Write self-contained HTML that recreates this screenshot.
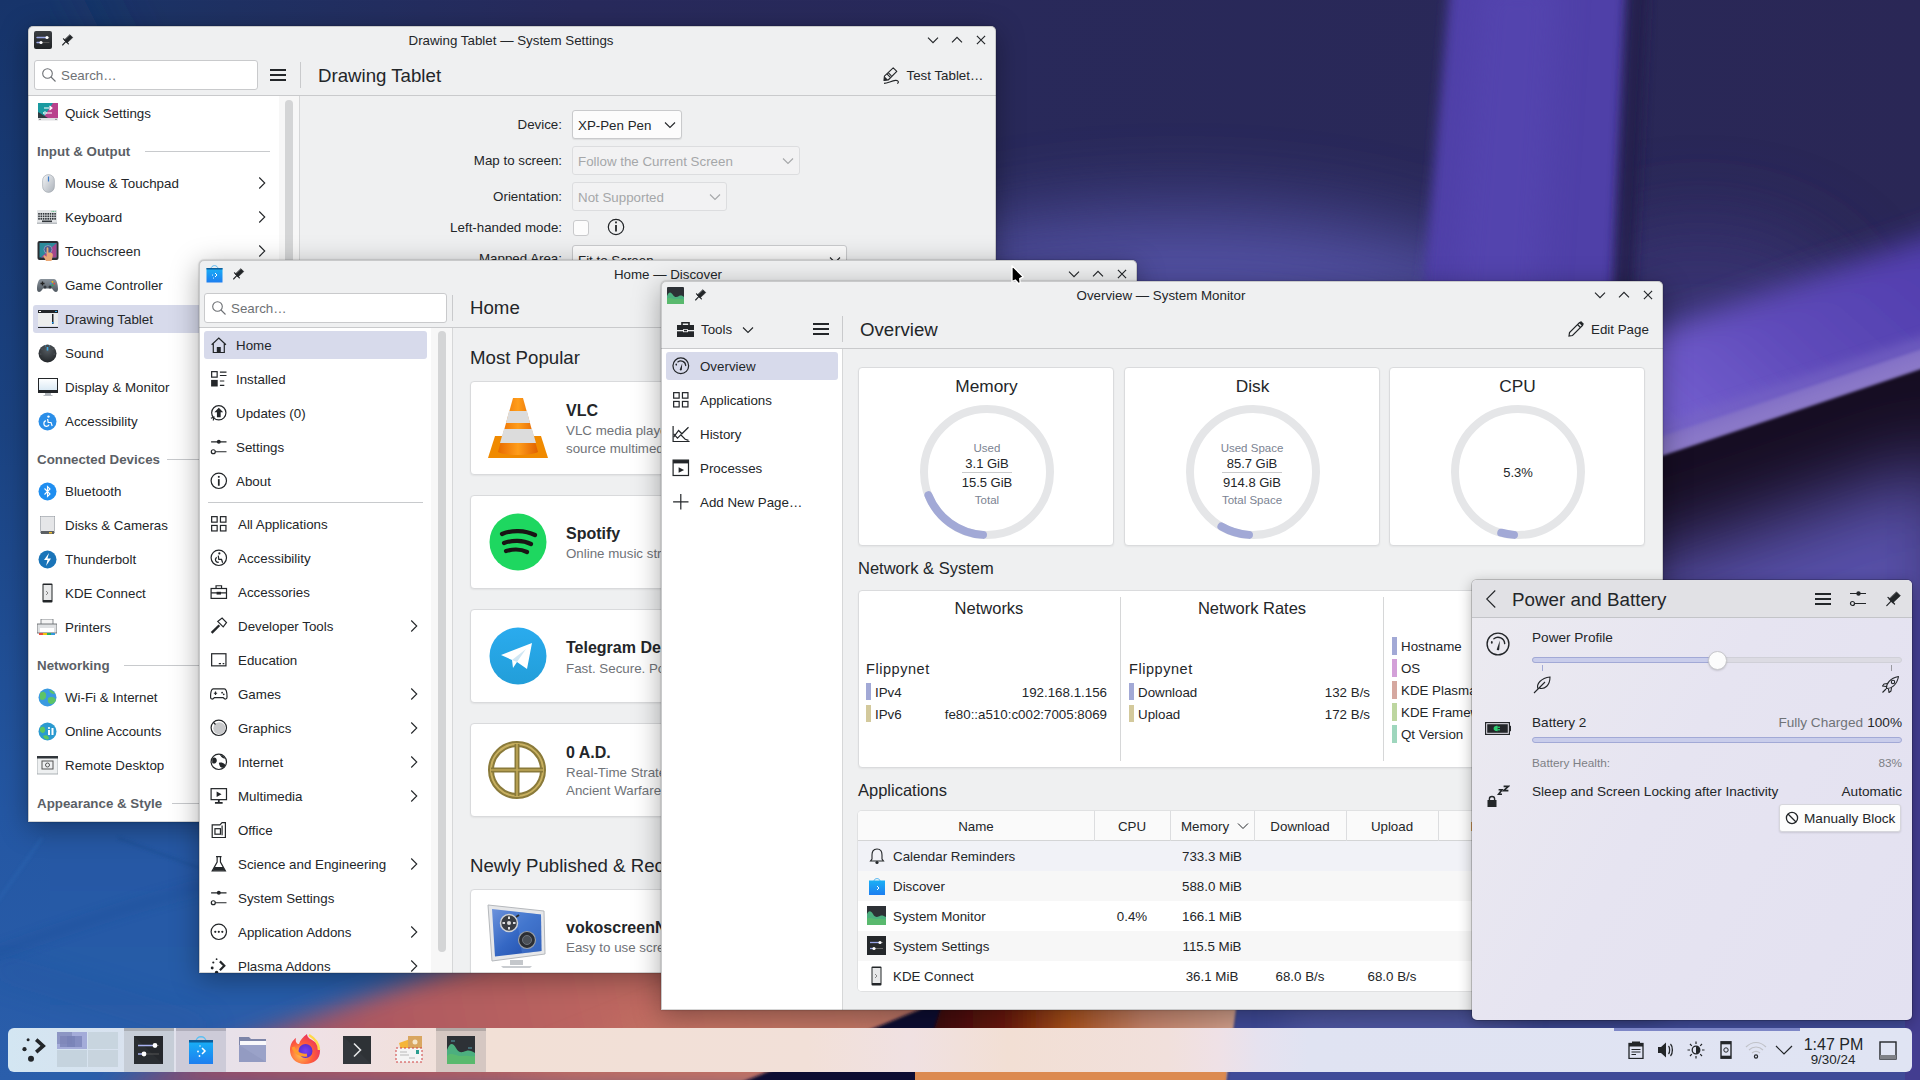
<!DOCTYPE html>
<html><head><meta charset="utf-8">
<style>
*{box-sizing:border-box;margin:0;padding:0}
html,body{width:1920px;height:1080px;overflow:hidden}
body{position:relative;font-family:"Liberation Sans",sans-serif;color:#232629;font-size:13.33px;background:#1c2a55}
.a{position:absolute}
.t{position:absolute;white-space:nowrap}
.win{position:absolute;overflow:hidden;background:#eff0f1;border-radius:5px 5px 0 0}
</style></head><body>
<svg class="a" style="left:0;top:0" width="1920" height="1080" viewBox="0 0 1920 1080">
<defs>
<linearGradient id="wg0" x1="0" y1="0" x2="1920" y2="0" gradientUnits="userSpaceOnUse">
<stop offset="0" stop-color="#17376b"/><stop offset="0.12" stop-color="#1f3163"/><stop offset="0.3" stop-color="#282a5c"/><stop offset="1" stop-color="#2a2756"/>
</linearGradient>
<linearGradient id="wgL" x1="0" y1="0" x2="0" y2="1080" gradientUnits="userSpaceOnUse">
<stop offset="0" stop-color="#17346a"/><stop offset="0.4" stop-color="#1b4382"/><stop offset="0.75" stop-color="#2457a3"/><stop offset="1" stop-color="#2a5eab"/>
</linearGradient>
<linearGradient id="wgS" x1="150" y1="1080" x2="1000" y2="900" gradientUnits="userSpaceOnUse">
<stop offset="0" stop-color="#8e4a6a"/><stop offset="0.3" stop-color="#b05a60"/><stop offset="0.65" stop-color="#c26c60"/><stop offset="1" stop-color="#b87a6a"/>
</linearGradient>
<linearGradient id="wgO" x1="930" y1="0" x2="1236" y2="0" gradientUnits="userSpaceOnUse">
<stop offset="0" stop-color="#3a0608"/><stop offset="0.25" stop-color="#6a1a08"/><stop offset="0.45" stop-color="#a8501c"/><stop offset="0.7" stop-color="#c5836a"/><stop offset="1" stop-color="#d2a08c"/>
</linearGradient>
<linearGradient id="wgV" x1="1400" y1="0" x2="1620" y2="0" gradientUnits="userSpaceOnUse">
<stop offset="0" stop-color="#3a3288" stop-opacity="0"/><stop offset="0.18" stop-color="#4e3fa8"/><stop offset="0.5" stop-color="#5241aa"/><stop offset="1" stop-color="#4a3aa4"/>
</linearGradient>
<linearGradient id="wgD" x1="1680" y1="440" x2="1900" y2="200" gradientUnits="userSpaceOnUse">
<stop offset="0" stop-color="#7560d0"/><stop offset="0.5" stop-color="#5d49b8"/><stop offset="1" stop-color="#4f3cac"/>
</linearGradient>
<linearGradient id="wgB" x1="0" y1="470" x2="0" y2="620" gradientUnits="userSpaceOnUse">
<stop offset="0" stop-color="#170e22"/><stop offset="0.4" stop-color="#1e1535"/><stop offset="1" stop-color="#4a4190"/>
</linearGradient>
<filter id="bl2" x="-20%" y="-20%" width="140%" height="140%"><feGaussianBlur stdDeviation="1.5"/></filter>
<filter id="bl6" x="-20%" y="-20%" width="140%" height="140%"><feGaussianBlur stdDeviation="6"/></filter>
<filter id="bl10x" x="-50%" y="-20%" width="200%" height="140%"><feGaussianBlur stdDeviation="12"/></filter>
<filter id="bl15" x="-30%" y="-30%" width="160%" height="160%"><feGaussianBlur stdDeviation="15"/></filter>
<filter id="bl40" x="-50%" y="-50%" width="200%" height="200%"><feGaussianBlur stdDeviation="40"/></filter>
</defs>
<rect width="1920" height="1080" fill="url(#wg0)"/>
<!-- left blue column -->
<polygon points="-200,-100 10,-100 330,560 950,1200 -200,1200" fill="url(#wgL)" filter="url(#bl40)"/>
<rect x="-50" y="0" width="100" height="1080" fill="url(#wgL)"/>
<!-- faint streaks bottom-left -->
<path d="M-10 955 C60 930 130 905 210 885" stroke="#1d4c94" stroke-width="6" fill="none" opacity="0.55" filter="url(#bl6)"/>
<path d="M42 838 L-5 905" stroke="#2a64b0" stroke-width="3" fill="none" opacity="0.6" filter="url(#bl2)"/>
<path d="M118 838 L210 872" stroke="#1f4f96" stroke-width="3" fill="none" opacity="0.6" filter="url(#bl2)"/>
<path d="M-10 965 C60 985 140 1010 210 1030" stroke="#1f5098" stroke-width="10" fill="none" opacity="0.45" filter="url(#bl15)"/>
<!-- purple-blue glow middle -->
<ellipse cx="1180" cy="330" rx="360" ry="120" fill="#5754aa" opacity="0.9" filter="url(#bl40)"/>
<!-- vertical purple beam -->
<ellipse cx="1700" cy="330" rx="160" ry="110" fill="#3a3676" opacity="0.8" filter="url(#bl40)"/>
<polygon points="1452,-40 1630,-40 1600,640 1392,640" fill="#4f3fa8" filter="url(#bl6)"/>
<polygon points="1480,-20 1560,-20 1520,620 1430,620" fill="#5646b2" opacity="0.6" filter="url(#bl15)"/>
<polygon points="1628,-20 1648,-20 1618,620 1598,620" fill="#231d48" opacity="0.75" filter="url(#bl6)"/>
<!-- diagonal beam -->
<polygon points="1540,372 1960,224 1960,372 1540,512" fill="url(#wgD)" filter="url(#bl15)"/>
<!-- dark below diagonal -->
<polygon points="1500,500 1663,445 1960,345 1960,760 1500,760" fill="#170e22" filter="url(#bl2)"/>
<polygon points="1560,590 1960,455 1960,760 1560,760" fill="#5750a8" filter="url(#bl40)"/>
<polygon points="1560,470 1960,336 1960,356 1560,490" fill="#8a78c8" filter="url(#bl2)"/>
<polygon points="1600,445 1960,324 1960,340 1600,460" fill="#7866c4" opacity="0.7" filter="url(#bl6)"/>
<!-- salmon bottom -->
<polygon points="103,1090 928,800 1000,800 1000,1090" fill="url(#wgS)" filter="url(#bl10x)"/>
<polygon points="500,1080 700,1000 880,980 900,1080" fill="#c67a66" opacity="0.5" filter="url(#bl15)"/>
<!-- dark wedge + orange -->
<polygon points="955,995 1240,995 1226,1090 723,1090" fill="#0c1030" filter="url(#bl2)"/>
<polygon points="945,995 1240,995 1226,1090 915,1090" fill="url(#wgO)" filter="url(#bl2)"/>
<polygon points="915,1072 1226,1072 1226,1090 915,1090" fill="#dc8a50"/>
<polygon points="1238,995 1960,995 1960,1090 1226,1090" fill="#404c98" filter="url(#bl2)"/>
<ellipse cx="1400" cy="1020" rx="120" ry="30" fill="#5a60a8" opacity="0.6" filter="url(#bl15)"/>
<rect x="1905" y="600" width="30" height="490" fill="#433d90"/>
</svg>
<div class="win" style="left:28px;top:26px;width:968px;height:796px;box-shadow:0 0 1.5px rgba(0,0,0,0.5), 0 6px 28px rgba(0,0,0,0.34);">
<div class="a" style="left:6.00px;top:5.00px;width:18px;height:18px;background:linear-gradient(#3b3e42,#202326);border-radius:2px;"></div>
<svg class="a" style="left:6.00px;top:5.00px;" width="18" height="18" viewBox="0 0 18 18"><g stroke-linecap="round"><path d="M3 6.5 H13" stroke="#9aa6e8" stroke-width="1.4"/><path d="M13 6.5 H15" stroke="#555" stroke-width="1"/><circle cx="13" cy="6.5" r="1.6" fill="#fff"/><path d="M3 11.5 H7" stroke="#9aa6e8" stroke-width="1.4"/><path d="M7 11.5 H15" stroke="#555" stroke-width="1"/><circle cx="7" cy="11.5" r="1.6" fill="#fff"/></g></svg>
<svg class="a" style="left:34.00px;top:7.50px;" width="12" height="12" viewBox="0 0 12 12"><g fill="#232629" stroke="#232629" stroke-linecap="round"><path d="M8 0.8 L10.8 3.6 L5 9 L2.3 6.2 Z" stroke-width="0.5"/><path d="M1.5 4.8 L6.4 9.8" stroke-width="1.2"/><path d="M4 7.4 L0.6 11" stroke-width="1.1"/></g></svg>
<div class="t" style="font-size:13.33px;line-height:20px;height:20px;color:#232629;left:183.00px;width:600px;text-align:center;top:5.17px;">Drawing Tablet — System Settings</div>
<svg class="a" style="left:899.00px;top:8.00px;" width="12" height="12" viewBox="0 0 12 12"><path d="M1 3.6 L6 8.6 L11 3.6" fill="none" stroke="#232629" stroke-width="1.15"/></svg>
<svg class="a" style="left:923.00px;top:8.00px;" width="12" height="12" viewBox="0 0 12 12"><path d="M1 8.4 L6 3.4 L11 8.4" fill="none" stroke="#232629" stroke-width="1.15"/></svg>
<svg class="a" style="left:947.00px;top:8.00px;" width="12" height="12" viewBox="0 0 12 12"><path d="M1.9 1.9 L10.1 10.1 M10.1 1.9 L1.9 10.1" fill="none" stroke="#232629" stroke-width="1.15"/></svg>
<div class="a" style="left:6.00px;top:34.00px;width:224px;height:30px;background:#fff;border:1px solid #c9cacc;border-radius:3px;"></div>
<svg class="a" style="left:13.00px;top:41.00px;" width="16" height="16" viewBox="0 0 16 16"><g fill="none" stroke="#6d7074" stroke-width="1.1"><circle cx="6.5" cy="6.5" r="4.8"/><path d="M10 10 L14.5 14.5"/></g></svg>
<div class="t" style="font-size:13.33px;line-height:20px;height:20px;color:#6e7175;left:33.00px;top:40.17px;">Search…</div>
<svg class="a" style="left:242.00px;top:43.00px;" width="16" height="12" viewBox="0 0 16 12"><g fill="#232629"><rect x="0" y="0" width="16" height="2"/><rect x="0" y="5" width="16" height="2"/><rect x="0" y="10" width="16" height="2"/></g></svg>
<div class="a" style="left:272.00px;top:36.00px;width:1px;height:26px;background:#c9cacc;"></div>
<div class="a" style="left:0.00px;top:69.00px;width:968px;height:1px;background:#c9cacc;"></div>
<div class="a" style="left:1.00px;top:70.00px;width:250px;height:726px;background:#fff;"></div>
<div class="a" style="left:251.00px;top:70.00px;width:20px;height:726px;background:#f7f7f7;"></div>
<div class="a" style="left:257.00px;top:74.00px;width:8px;height:722px;background:#d4d5d6;border-radius:4px;"></div>
<div class="a" style="left:271.00px;top:70.00px;width:1px;height:726px;background:#d6d7d8;"></div>
<div class="t" style="font-size:18.67px;line-height:28px;height:28px;color:#232629;left:290.00px;top:35.87px;">Drawing Tablet</div>
<svg class="a" style="left:855.00px;top:41.00px;" width="18" height="18" viewBox="0 0 18 18"><g fill="none" stroke="#232629" stroke-width="1.1" stroke-linejoin="round"><path d="M10.2 0.8 L13.8 4.4 L5.2 13 L1 13.4 L1.4 9.2 Z"/><path d="M3.9 6.9 L7.1 10.1 M5.2 5.6 L8.4 8.8"/><path d="M1 16.4 C5 16 8.5 13.8 12.5 13.4 C15.8 13.1 16.2 15.8 14.2 16.6"/></g><path d="M1.4 9.2 L3.9 11.7 L5.2 13 L1 13.4 Z" fill="#232629"/></svg>
<div class="t" style="font-size:13.33px;line-height:20px;height:20px;color:#232629;left:878.50px;top:40.17px;">Test Tablet…</div>
<div class="a" style="left:5.00px;top:279.00px;width:246px;height:28px;background:#d7daeb;border-radius:3px 0 0 3px;"></div>
<svg class="a" style="left:10.00px;top:77.00px;" width="20" height="19" viewBox="0 0 20 19"><path d="M0 0 H20 V15 H0 Z" fill="#b8428c"/><path d="M0 0 H15 L5 15 H0 Z" fill="#1a9aa0"/><path d="M0 9 L10 15 H0 Z" fill="#2f3a40"/><rect x="0" y="15" width="20" height="2.5" fill="#dfe0e2"/><circle cx="2" cy="16.3" r="0.6" fill="#444"/><circle cx="18" cy="16.3" r="0.6" fill="#444"/><path d="M6 5 H13.5 M11.5 3 L14 5 L11.5 7" fill="none" stroke="#fff" stroke-width="1.1"/><path d="M8 10 H14 M5 10 H6" stroke="#fff" stroke-width="1.1"/><circle cx="7" cy="10" r="1.2" fill="none" stroke="#fff" stroke-width="0.9"/></svg>
<div class="t" style="font-size:13.33px;line-height:20px;height:20px;color:#232629;left:37.00px;top:78.17px;">Quick Settings</div>
<div class="t" style="font-size:13.33px;line-height:20px;height:20px;color:#5b5f66;font-weight:700;left:9.00px;top:116.17px;">Input &amp; Output</div>
<div class="a" style="left:117.00px;top:125.00px;width:125px;height:1px;background:#c8cacd;"></div>
<svg class="a" style="left:14.00px;top:148.00px;" width="13" height="19" viewBox="0 0 13 19"><defs><linearGradient id="mg" x1="0" y1="0" x2="1" y2="1"><stop offset="0" stop-color="#f5f6f7"/><stop offset="1" stop-color="#aab1ba"/></linearGradient></defs><rect x="0.6" y="0.6" width="11.8" height="17.8" rx="5.9" fill="url(#mg)" stroke="#9aa1a9" stroke-width="0.6"/><rect x="5.9" y="2.5" width="1.2" height="5" fill="#3a7bc8"/></svg>
<div class="t" style="font-size:13.33px;line-height:20px;height:20px;color:#232629;left:37.00px;top:148.17px;">Mouse &amp; Touchpad</div>
<svg class="a" style="left:223.00px;top:146.00px;" width="22" height="22" viewBox="0 0 22 22"><path d="M-2.75 -5.5 L2.75 0 L-2.75 5.5" transform="translate(11 11)" fill="none" stroke="#232629" stroke-width="1.1"/></svg>
<svg class="a" style="left:9.00px;top:184.00px;" width="20" height="14" viewBox="0 0 20 14"><rect x="0" y="0" width="20" height="14" rx="1" fill="#e3e5e7"/><rect x="0" y="12.5" width="20" height="1.5" fill="#b9bdc1"/><circle cx="15" cy="1.3" r="0.5" fill="#27ae60"/><circle cx="16.6" cy="1.3" r="0.5" fill="#27ae60"/><circle cx="18.2" cy="1.3" r="0.5" fill="#27ae60"/><rect x="1.2" y="3.0" width="1.6" height="1.7" fill="#31363b"/><rect x="1.2" y="5.5" width="1.6" height="1.7" fill="#31363b"/><rect x="1.2" y="8.0" width="1.6" height="1.7" fill="#31363b"/><rect x="3.5" y="3.0" width="1.6" height="1.7" fill="#31363b"/><rect x="3.5" y="5.5" width="1.6" height="1.7" fill="#31363b"/><rect x="3.5" y="8.0" width="1.6" height="1.7" fill="#31363b"/><rect x="5.8" y="3.0" width="1.6" height="1.7" fill="#31363b"/><rect x="5.8" y="5.5" width="1.6" height="1.7" fill="#31363b"/><rect x="5.8" y="8.0" width="1.6" height="1.7" fill="#31363b"/><rect x="8.1" y="3.0" width="1.6" height="1.7" fill="#31363b"/><rect x="8.1" y="5.5" width="1.6" height="1.7" fill="#31363b"/><rect x="8.1" y="8.0" width="1.6" height="1.7" fill="#31363b"/><rect x="10.399999999999999" y="3.0" width="1.6" height="1.7" fill="#31363b"/><rect x="10.399999999999999" y="5.5" width="1.6" height="1.7" fill="#31363b"/><rect x="10.399999999999999" y="8.0" width="1.6" height="1.7" fill="#31363b"/><rect x="12.7" y="3.0" width="1.6" height="1.7" fill="#31363b"/><rect x="12.7" y="5.5" width="1.6" height="1.7" fill="#31363b"/><rect x="12.7" y="8.0" width="1.6" height="1.7" fill="#31363b"/><rect x="14.999999999999998" y="3.0" width="1.6" height="1.7" fill="#31363b"/><rect x="14.999999999999998" y="5.5" width="1.6" height="1.7" fill="#31363b"/><rect x="14.999999999999998" y="8.0" width="1.6" height="1.7" fill="#31363b"/><rect x="17.299999999999997" y="3.0" width="1.6" height="1.7" fill="#31363b"/><rect x="17.299999999999997" y="5.5" width="1.6" height="1.7" fill="#31363b"/><rect x="17.299999999999997" y="8.0" width="1.6" height="1.7" fill="#31363b"/><rect x="5" y="10.5" width="10" height="1.6" fill="#31363b"/></svg>
<div class="t" style="font-size:13.33px;line-height:20px;height:20px;color:#232629;left:37.00px;top:182.17px;">Keyboard</div>
<svg class="a" style="left:223.00px;top:180.00px;" width="22" height="22" viewBox="0 0 22 22"><path d="M-2.75 -5.5 L2.75 0 L-2.75 5.5" transform="translate(11 11)" fill="none" stroke="#232629" stroke-width="1.1"/></svg>
<svg class="a" style="left:9.00px;top:214.00px;" width="22" height="22" viewBox="0 0 22 22"><rect x="0.5" y="1" width="21" height="19" rx="2" fill="#2b2e33"/><path d="M2.5 3 H19.5 V17.5 H2.5 Z" fill="#2d8b9b"/><path d="M19.5 3 V17.5 H4 Z" fill="#a3468c"/><circle cx="11" cy="9.5" r="4" fill="#4b5a8a" stroke="#9aa6c8" stroke-width="0.8"/><path d="M9.6 8 C9.6 7 11.4 7 11.4 8 V12.5 L14.5 13 C16 13.3 16 15 15.5 17 L14.5 21 H9 L6.5 16.5 C6 15.5 7.2 14.8 8 15.5 L9.6 16.8 Z" fill="#e9a774"/></svg>
<div class="t" style="font-size:13.33px;line-height:20px;height:20px;color:#232629;left:37.00px;top:216.17px;">Touchscreen</div>
<svg class="a" style="left:223.00px;top:214.00px;" width="22" height="22" viewBox="0 0 22 22"><path d="M-2.75 -5.5 L2.75 0 L-2.75 5.5" transform="translate(11 11)" fill="none" stroke="#232629" stroke-width="1.1"/></svg>
<svg class="a" style="left:9.00px;top:252.00px;" width="21" height="15" viewBox="0 0 21 15"><defs><linearGradient id="gcg" x1="0" y1="0" x2="0" y2="1"><stop offset="0" stop-color="#8a939c"/><stop offset="1" stop-color="#4f5860"/></linearGradient></defs><path d="M4 1 H17 C19.5 1 21 6 21 11 C21 14.5 18 15 16 12 L15 10.5 H6 L5 12 C3 15 0 14.5 0 11 C0 6 1.5 1 4 1 Z" fill="url(#gcg)"/><path d="M3.5 5.5 H7.5 M5.5 3.5 V7.5" stroke="#222" stroke-width="1.3"/><circle cx="15.5" cy="3.8" r="0.9" fill="#f1c40f"/><circle cx="17.3" cy="5.6" r="0.9" fill="#e74c3c"/><circle cx="13.7" cy="5.6" r="0.9" fill="#3498db"/><circle cx="15.5" cy="7.4" r="0.9" fill="#27ae60"/><circle cx="8" cy="9" r="1.5" fill="#33383d"/><circle cx="13" cy="9" r="1.5" fill="#33383d"/></svg>
<div class="t" style="font-size:13.33px;line-height:20px;height:20px;color:#232629;left:37.00px;top:250.17px;">Game Controller</div>
<svg class="a" style="left:10.00px;top:284.00px;" width="20" height="18" viewBox="0 0 20 18"><rect x="0" y="0" width="20" height="3" fill="#232629"/><rect x="1" y="1" width="2" height="1" fill="#fff"/><rect x="17" y="1" width="2" height="1" fill="#3daee9"/><rect x="0" y="3" width="20" height="13" fill="#eceded"/><rect x="14" y="4" width="1.5" height="10" fill="#232629"/><rect x="14" y="12" width="1.5" height="1.5" fill="#1d99f3"/><rect x="0" y="17" width="20" height="1.2" fill="#232629"/></svg>
<div class="t" style="font-size:13.33px;line-height:20px;height:20px;color:#232629;left:37.00px;top:284.17px;">Drawing Tablet</div>
<svg class="a" style="left:10.00px;top:318.00px;" width="19" height="19" viewBox="0 0 19 19"><defs><radialGradient id="sg" cx="0.5" cy="0.3" r="0.75"><stop offset="0" stop-color="#555b61"/><stop offset="1" stop-color="#1f2326"/></radialGradient></defs><circle cx="9.5" cy="9.5" r="9" fill="url(#sg)"/><rect x="8.7" y="3" width="1.6" height="3.5" fill="#3daee9"/><path d="M7 1.8 L8 2 M12 2 L11 1.8" stroke="#3daee9" stroke-width="0.8"/><circle cx="4" cy="5" r="0.5" fill="#6d747b"/><circle cx="15" cy="5" r="0.5" fill="#6d747b"/><circle cx="2.8" cy="10" r="0.5" fill="#6d747b"/><circle cx="16.2" cy="10" r="0.5" fill="#6d747b"/></svg>
<div class="t" style="font-size:13.33px;line-height:20px;height:20px;color:#232629;left:37.00px;top:318.17px;">Sound</div>
<svg class="a" style="left:10.00px;top:352.00px;" width="20" height="19" viewBox="0 0 20 19"><defs><linearGradient id="dsg" x1="0" y1="0" x2="0" y2="1"><stop offset="0" stop-color="#fdfeff"/><stop offset="1" stop-color="#dbeaf5"/></linearGradient></defs><rect x="0" y="0" width="20" height="15" fill="#232629"/><rect x="1" y="1" width="18" height="11" fill="url(#dsg)"/><rect x="7" y="15" width="6" height="2" fill="#b0b5ba"/><rect x="5.5" y="17" width="9" height="0.9" fill="#b0b5ba"/></svg>
<div class="t" style="font-size:13.33px;line-height:20px;height:20px;color:#232629;left:37.00px;top:352.17px;">Display &amp; Monitor</div>
<svg class="a" style="left:10.00px;top:386.00px;" width="19" height="19" viewBox="0 0 19 19"><circle cx="9.5" cy="9.5" r="9" fill="#2a8ee8"/><circle cx="10.5" cy="4.6" r="1.2" fill="#fff"/><path d="M9.6 7 L10.2 10.5 H13 L14.2 14 M7.8 8.6 C5 9.8 5.2 14.5 8.8 14.3 C10 14.2 10.8 13.5 11 12.6" fill="none" stroke="#fff" stroke-width="1.2"/></svg>
<div class="t" style="font-size:13.33px;line-height:20px;height:20px;color:#232629;left:37.00px;top:386.17px;">Accessibility</div>
<div class="t" style="font-size:13.33px;line-height:20px;height:20px;color:#5b5f66;font-weight:700;left:9.00px;top:424.17px;">Connected Devices</div>
<div class="a" style="left:139.00px;top:433.00px;width:103px;height:1px;background:#c8cacd;"></div>
<svg class="a" style="left:10.00px;top:456.00px;" width="19" height="19" viewBox="0 0 19 19"><circle cx="9.5" cy="9.5" r="9" fill="#1f8ef0"/><path d="M6.5 6.5 L12 12 L9.5 14.5 V4.5 L12 7 L6.5 12.5" fill="none" stroke="#fff" stroke-width="1.1"/></svg>
<div class="t" style="font-size:13.33px;line-height:20px;height:20px;color:#232629;left:37.00px;top:456.17px;">Bluetooth</div>
<svg class="a" style="left:12.00px;top:490.00px;" width="15" height="19" viewBox="0 0 15 19"><rect x="0" y="0" width="15" height="17" rx="1.5" fill="#e5e6e8" stroke="#8a9097" stroke-width="1"/><rect x="1" y="15" width="13" height="3" fill="#5b5f63"/><rect x="9" y="16" width="3" height="1.5" fill="#f0c030"/></svg>
<div class="t" style="font-size:13.33px;line-height:20px;height:20px;color:#232629;left:37.00px;top:490.17px;">Disks &amp; Cameras</div>
<svg class="a" style="left:10.00px;top:524.00px;" width="19" height="19" viewBox="0 0 19 19"><circle cx="9.5" cy="9.5" r="9" fill="#1a74b8"/><path d="M11 3 L6 10 H9.5 L8 16 L13 8.5 H9.5 Z" fill="#fff"/></svg>
<div class="t" style="font-size:13.33px;line-height:20px;height:20px;color:#232629;left:37.00px;top:524.17px;">Thunderbolt</div>
<svg class="a" style="left:14.00px;top:557.00px;" width="11" height="20" viewBox="0 0 11 20"><rect x="0.5" y="0.5" width="10" height="19" rx="1" fill="#232629"/><rect x="1.5" y="2" width="8" height="15" fill="#e8e9ea"/><path d="M4 8 L6 10 L4 12" fill="none" stroke="#888" stroke-width="1"/></svg>
<div class="t" style="font-size:13.33px;line-height:20px;height:20px;color:#232629;left:37.00px;top:558.17px;">KDE Connect</div>
<svg class="a" style="left:9.00px;top:593.00px;" width="20" height="17" viewBox="0 0 20 17"><rect x="4" y="0" width="12" height="6" fill="#f4f4f4" stroke="#6b7075" stroke-width="0.8"/><rect x="0" y="5" width="20" height="9" fill="#dfe1e3" stroke="#5b5f63" stroke-width="0.8"/><rect x="3" y="9" width="14" height="4" fill="#fff"/><rect x="2" y="14" width="4" height="2" fill="#e74c3c"/><rect x="6" y="14" width="4" height="2" fill="#f1c40f"/><rect x="10" y="14" width="4" height="2" fill="#27ae60"/><rect x="14" y="14" width="4" height="2" fill="#3498db"/></svg>
<div class="t" style="font-size:13.33px;line-height:20px;height:20px;color:#232629;left:37.00px;top:592.17px;">Printers</div>
<div class="t" style="font-size:13.33px;line-height:20px;height:20px;color:#5b5f66;font-weight:700;left:9.00px;top:630.17px;">Networking</div>
<div class="a" style="left:96.00px;top:639.00px;width:146px;height:1px;background:#c8cacd;"></div>
<svg class="a" style="left:10.00px;top:662.00px;" width="19" height="19" viewBox="0 0 19 19"><circle cx="9.5" cy="9.5" r="9" fill="#3a9ae0"/><path d="M2 5 C6 2 9 5 8 9 C7 12 4 13 2 11 Z M10 10 C13 8 17 9 18 12 C16 17 12 17 10 14Z M11 2 C14 2 16 4 17 6 C14 6 12 5 11 2Z" fill="#5dc466"/></svg>
<div class="t" style="font-size:13.33px;line-height:20px;height:20px;color:#232629;left:37.00px;top:662.17px;">Wi-Fi &amp; Internet</div>
<svg class="a" style="left:10.00px;top:696.00px;" width="19" height="19" viewBox="0 0 19 19"><circle cx="9.5" cy="9.5" r="9" fill="#2b9ad0"/><path d="M2 6 C5 3 8 6 7 9 C6 12 3 11 2 9 Z M5 14 C8 12 11 14 11 17 C8 18 6 17 5 14Z" fill="#5cc860"/><rect x="10" y="8" width="2" height="5" fill="#fff"/><circle cx="11" cy="6" r="1.1" fill="#fff"/><rect x="13.5" y="6" width="2" height="7" fill="#fff"/></svg>
<div class="t" style="font-size:13.33px;line-height:20px;height:20px;color:#232629;left:37.00px;top:696.17px;">Online Accounts</div>
<svg class="a" style="left:9.00px;top:730.00px;" width="21" height="19" viewBox="0 0 21 19"><rect x="0" y="0" width="21" height="18" fill="#eef0f1" stroke="#9aa0a6" stroke-width="0.8"/><rect x="0" y="0" width="21" height="2.5" fill="#31363b"/><rect x="5" y="5" width="11" height="8" fill="none" stroke="#555" stroke-width="1"/><circle cx="10.5" cy="9" r="2" fill="none" stroke="#555" stroke-width="1"/></svg>
<div class="t" style="font-size:13.33px;line-height:20px;height:20px;color:#232629;left:37.00px;top:730.17px;">Remote Desktop</div>
<div class="t" style="font-size:13.33px;line-height:20px;height:20px;color:#5b5f66;font-weight:700;left:9.00px;top:768.17px;">Appearance &amp; Style</div>
<div class="a" style="left:144.00px;top:777.00px;width:98px;height:1px;background:#c8cacd;"></div>
<div class="t" style="font-size:13.33px;line-height:20px;height:20px;color:#232629;left:334.00px;width:200px;text-align:right;top:89.17px;">Device:</div>
<div class="t" style="font-size:13.33px;line-height:20px;height:20px;color:#232629;left:334.00px;width:200px;text-align:right;top:125.17px;">Map to screen:</div>
<div class="t" style="font-size:13.33px;line-height:20px;height:20px;color:#232629;left:334.00px;width:200px;text-align:right;top:161.17px;">Orientation:</div>
<div class="t" style="font-size:13.33px;line-height:20px;height:20px;color:#232629;left:334.00px;width:200px;text-align:right;top:192.17px;">Left-handed mode:</div>
<div class="t" style="font-size:13.33px;line-height:20px;height:20px;color:#232629;left:334.00px;width:200px;text-align:right;top:223.17px;">Mapped Area:</div>
<div class="a" style="left:544.00px;top:84.00px;width:110px;height:29px;background:#fcfcfc;border:1px solid #c9cacc;border-radius:3px;box-shadow:0 1px 1px rgba(0,0,0,0.08);"></div>
<div class="t" style="font-size:13.33px;line-height:20px;height:20px;color:#232629;left:550.00px;top:89.67px;">XP-Pen Pen</div>
<svg class="a" style="left:632.00px;top:88.50px;" width="20" height="20" viewBox="0 0 20 20"><path d="M-5.0 -2.5 L0 2.5 L5.0 -2.5" transform="translate(10 10)" fill="none" stroke="#232629" stroke-width="1.1"/></svg>
<div class="a" style="left:544.00px;top:120.00px;width:228px;height:29px;background:#f2f2f3;border:1px solid #dcdddf;border-radius:3px;"></div>
<div class="t" style="font-size:13.33px;line-height:20px;height:20px;color:#a5a7a9;left:550.00px;top:125.67px;">Follow the Current Screen</div>
<svg class="a" style="left:750.00px;top:124.50px;" width="20" height="20" viewBox="0 0 20 20"><path d="M-5.0 -2.5 L0 2.5 L5.0 -2.5" transform="translate(10 10)" fill="none" stroke="#a5a7a9" stroke-width="1.1"/></svg>
<div class="a" style="left:544.00px;top:156.00px;width:155px;height:29px;background:#f2f2f3;border:1px solid #dcdddf;border-radius:3px;"></div>
<div class="t" style="font-size:13.33px;line-height:20px;height:20px;color:#a5a7a9;left:550.00px;top:161.67px;">Not Supported</div>
<svg class="a" style="left:677.00px;top:160.50px;" width="20" height="20" viewBox="0 0 20 20"><path d="M-5.0 -2.5 L0 2.5 L5.0 -2.5" transform="translate(10 10)" fill="none" stroke="#a5a7a9" stroke-width="1.1"/></svg>
<div class="a" style="left:545.00px;top:194.00px;width:16px;height:16px;background:#fcfcfc;border:1px solid #c9cacc;border-radius:3px;"></div>
<svg class="a" style="left:579.00px;top:192.00px;" width="18" height="18" viewBox="0 0 18 18"><circle cx="9" cy="9" r="7.7" fill="none" stroke="#232629" stroke-width="1.2"/><rect x="8.1" y="7" width="1.8" height="6.5" fill="#232629"/><rect x="8.1" y="3.5" width="1.8" height="1.8" fill="#232629"/></svg>
<div class="a" style="left:544.00px;top:219.00px;width:275px;height:29px;background:#fcfcfc;border:1px solid #c9cacc;border-radius:3px;box-shadow:0 1px 1px rgba(0,0,0,0.08);"></div>
<div class="t" style="font-size:13.33px;line-height:20px;height:20px;color:#232629;left:550.00px;top:224.67px;">Fit to Screen</div>
<svg class="a" style="left:797.00px;top:223.50px;" width="20" height="20" viewBox="0 0 20 20"><path d="M-5.0 -2.5 L0 2.5 L5.0 -2.5" transform="translate(10 10)" fill="none" stroke="#232629" stroke-width="1.1"/></svg>
<div class="a" style="left:0;top:0;right:0;bottom:0;border:1px solid rgba(0,0,0,0.16);border-radius:5px 5px 0 0;"></div>
</div>
<div class="win" style="left:199px;top:260px;width:938px;height:713px;box-shadow:0 0 1.5px rgba(0,0,0,0.5), 0 6px 28px rgba(0,0,0,0.34);">
<svg class="a" style="left:7.00px;top:4.00px;" width="17" height="19" viewBox="0 0 17 19"><defs><linearGradient id="dg" x1="0" y1="0" x2="0" y2="1"><stop offset="0" stop-color="#1ab0f5"/><stop offset="1" stop-color="#1d7ef0"/></linearGradient></defs><path d="M5 5 C5 0.5 12 0.5 12 5" fill="none" stroke="#5ab8f0" stroke-width="1"/><rect x="0.5" y="4" width="16" height="14.5" fill="url(#dg)"/><rect x="0.5" y="4" width="16" height="1.5" fill="#0f5f9a"/><path d="M9 9 L11 11 L9 13" fill="none" stroke="#fff" stroke-width="1"/><circle cx="6.5" cy="11" r="0.6" fill="#fff"/><circle cx="7.5" cy="14" r="0.6" fill="#fff"/></svg>
<svg class="a" style="left:34.00px;top:7.50px;" width="12" height="12" viewBox="0 0 12 12"><g fill="#232629" stroke="#232629" stroke-linecap="round"><path d="M8 0.8 L10.8 3.6 L5 9 L2.3 6.2 Z" stroke-width="0.5"/><path d="M1.5 4.8 L6.4 9.8" stroke-width="1.2"/><path d="M4 7.4 L0.6 11" stroke-width="1.1"/></g></svg>
<div class="t" style="font-size:13.33px;line-height:20px;height:20px;color:#232629;left:169.00px;width:600px;text-align:center;top:5.17px;">Home — Discover</div>
<svg class="a" style="left:869.00px;top:8.00px;" width="12" height="12" viewBox="0 0 12 12"><path d="M1 3.6 L6 8.6 L11 3.6" fill="none" stroke="#232629" stroke-width="1.15"/></svg>
<svg class="a" style="left:893.00px;top:8.00px;" width="12" height="12" viewBox="0 0 12 12"><path d="M1 8.4 L6 3.4 L11 8.4" fill="none" stroke="#232629" stroke-width="1.15"/></svg>
<svg class="a" style="left:917.00px;top:8.00px;" width="12" height="12" viewBox="0 0 12 12"><path d="M1.9 1.9 L10.1 10.1 M10.1 1.9 L1.9 10.1" fill="none" stroke="#232629" stroke-width="1.15"/></svg>
<div class="a" style="left:5.00px;top:33.00px;width:243px;height:30px;background:#fff;border:1px solid #c9cacc;border-radius:3px;"></div>
<svg class="a" style="left:12.00px;top:40.00px;" width="16" height="16" viewBox="0 0 16 16"><g fill="none" stroke="#6d7074" stroke-width="1.1"><circle cx="6.5" cy="6.5" r="4.8"/><path d="M10 10 L14.5 14.5"/></g></svg>
<div class="t" style="font-size:13.33px;line-height:20px;height:20px;color:#6e7175;left:32.00px;top:39.17px;">Search…</div>
<div class="a" style="left:253.00px;top:35.00px;width:1px;height:26px;background:#c9cacc;"></div>
<div class="t" style="font-size:18.67px;line-height:28px;height:28px;color:#232629;left:271.00px;top:34.37px;">Home</div>
<div class="a" style="left:0.00px;top:67.00px;width:938px;height:1px;background:#c9cacc;"></div>
<div class="a" style="left:1.00px;top:68.00px;width:231px;height:645px;background:#fff;"></div>
<div class="a" style="left:232.00px;top:68.00px;width:21px;height:645px;background:#f7f7f7;"></div>
<div class="a" style="left:239.00px;top:71.00px;width:8px;height:621px;background:#d4d5d6;border-radius:4px;"></div>
<div class="a" style="left:253.00px;top:68.00px;width:1px;height:645px;background:#d6d7d8;"></div>
<div class="a" style="left:5.00px;top:71.00px;width:223px;height:28px;background:#d7daeb;border-radius:3px;"></div>
<svg class="a" style="left:11.20px;top:76.20px;" width="17.6" height="17.6" viewBox="0 0 16 16"><path d="M1.5 8 L8 1.8 L14.5 8 M3 6.8 V15 H13 V6.8" fill="none" stroke="#232629" stroke-width="1.1"/><rect x="6.2" y="10" width="3.6" height="5" fill="#232629"/></svg>
<div class="t" style="font-size:13.33px;line-height:20px;height:20px;color:#232629;left:37.00px;top:76.17px;">Home</div>
<svg class="a" style="left:11.20px;top:110.20px;" width="17.6" height="17.6" viewBox="0 0 16 16"><rect x="1.5" y="1.5" width="5" height="5" fill="none" stroke="#232629" stroke-width="1.1"/><rect x="1" y="9" width="6" height="6" fill="#232629"/><path d="M9 2 H15 M9 5 H15 M9 10 H13 M9 14 H13" fill="none" stroke="#232629" stroke-width="1.1"/></svg>
<div class="t" style="font-size:13.33px;line-height:20px;height:20px;color:#232629;left:37.00px;top:110.17px;">Installed</div>
<svg class="a" style="left:11.20px;top:144.20px;" width="17.6" height="17.6" viewBox="0 0 16 16"><circle cx="8" cy="8" r="6.5" fill="none" stroke="#232629" stroke-width="1.1"/><path d="M8 3.5 L12 7.5 H9.7 V12 H6.3 V7.5 H4 Z" fill="#232629"/><path d="M0.8 13 L3.5 12 L3 15" fill="none" stroke="#232629" stroke-width="1.1"/></svg>
<div class="t" style="font-size:13.33px;line-height:20px;height:20px;color:#232629;left:37.00px;top:144.17px;">Updates (0)</div>
<svg class="a" style="left:11.20px;top:178.20px;" width="17.6" height="17.6" viewBox="0 0 16 16"><path d="M1 3.5 H15 M1 12.5 H15" fill="none" stroke="#232629" stroke-width="1.1"/><circle cx="8" cy="3.5" r="1.8" fill="#232629"/><circle cx="3" cy="12.5" r="1.8" fill="#fff" stroke="#232629" stroke-width="1.1"/></svg>
<div class="t" style="font-size:13.33px;line-height:20px;height:20px;color:#232629;left:37.00px;top:178.17px;">Settings</div>
<svg class="a" style="left:11.20px;top:212.20px;" width="17.6" height="17.6" viewBox="0 0 16 16"><circle cx="8" cy="8" r="7" fill="none" stroke="#232629" stroke-width="1.1"/><rect x="7.2" y="6.5" width="1.6" height="6" fill="#232629"/><rect x="7.2" y="3.6" width="1.6" height="1.6" fill="#232629"/></svg>
<div class="t" style="font-size:13.33px;line-height:20px;height:20px;color:#232629;left:37.00px;top:212.17px;">About</div>
<div class="a" style="left:9.00px;top:242.00px;width:215px;height:1px;background:#c8cacd;"></div>
<svg class="a" style="left:11.20px;top:255.20px;" width="17.6" height="17.6" viewBox="0 0 16 16"><rect x="1.5" y="1.5" width="5" height="5" fill="none" stroke="#232629" stroke-width="1.1"/><rect x="9.5" y="1.5" width="5" height="5" fill="none" stroke="#232629" stroke-width="1.1"/><rect x="1.5" y="9.5" width="5" height="5" fill="none" stroke="#232629" stroke-width="1.1"/><rect x="9.5" y="9.5" width="5" height="5" fill="none" stroke="#232629" stroke-width="1.1"/></svg>
<div class="t" style="font-size:13.33px;line-height:20px;height:20px;color:#232629;left:39.00px;top:255.17px;">All Applications</div>
<svg class="a" style="left:11.20px;top:289.20px;" width="17.6" height="17.6" viewBox="0 0 16 16"><circle cx="8" cy="8" r="7" fill="none" stroke="#232629" stroke-width="1.1"/><circle cx="8.5" cy="4" r="1" fill="#232629"/><path d="M7.5 6 L8 9.5 H10.5 L11.5 12.5 M6 7.5 C4 9.5 5 12.5 8 12" fill="none" stroke="#232629" stroke-width="1.1"/></svg>
<div class="t" style="font-size:13.33px;line-height:20px;height:20px;color:#232629;left:39.00px;top:289.17px;">Accessibility</div>
<svg class="a" style="left:11.20px;top:323.20px;" width="17.6" height="17.6" viewBox="0 0 16 16"><rect x="1" y="5" width="14" height="9" fill="none" stroke="#232629" stroke-width="1.1"/><path d="M5.5 5 V2.5 H10.5 V5 M1 9 H15" fill="none" stroke="#232629" stroke-width="1.1"/><rect x="6" y="8" width="4" height="2.5" fill="#232629"/></svg>
<div class="t" style="font-size:13.33px;line-height:20px;height:20px;color:#232629;left:39.00px;top:323.17px;">Accessories</div>
<svg class="a" style="left:11.20px;top:357.20px;" width="17.6" height="17.6" viewBox="0 0 16 16"><path d="M1.5 14.5 L8.5 7.5" stroke="#232629" stroke-width="2.2"/><path d="M7 4 L11 1 L15 5 L12 9 Z" fill="none" stroke="#232629" stroke-width="1.1"/></svg>
<div class="t" style="font-size:13.33px;line-height:20px;height:20px;color:#232629;left:39.00px;top:357.17px;">Developer Tools</div>
<svg class="a" style="left:204.00px;top:355.00px;" width="22" height="22" viewBox="0 0 22 22"><path d="M-2.75 -5.5 L2.75 0 L-2.75 5.5" transform="translate(11 11)" fill="none" stroke="#232629" stroke-width="1.1"/></svg>
<svg class="a" style="left:11.20px;top:391.20px;" width="17.6" height="17.6" viewBox="0 0 16 16"><rect x="1.5" y="2.5" width="13" height="11" fill="none" stroke="#232629" stroke-width="1.1"/><path d="M8 11.5 H10 M11.5 11.5 H13" fill="none" stroke="#232629" stroke-width="1.1"/></svg>
<div class="t" style="font-size:13.33px;line-height:20px;height:20px;color:#232629;left:39.00px;top:391.17px;">Education</div>
<svg class="a" style="left:11.20px;top:425.20px;" width="17.6" height="17.6" viewBox="0 0 16 16"><path d="M3 3.5 H13 C15 3.5 15.5 8 15.5 11 C15.5 13 13.5 13.5 12 11.5 H4 C2.5 13.5 0.5 13 0.5 11 C0.5 8 1 3.5 3 3.5 Z" fill="none" stroke="#232629" stroke-width="1.1"/><path d="M3.5 7.5 H6.5 M5 6 V9" fill="none" stroke="#232629" stroke-width="1.1"/><circle cx="11" cy="7" r="0.8" fill="#232629"/><circle cx="12.5" cy="8.5" r="0.8" fill="#232629"/></svg>
<div class="t" style="font-size:13.33px;line-height:20px;height:20px;color:#232629;left:39.00px;top:425.17px;">Games</div>
<svg class="a" style="left:204.00px;top:423.00px;" width="22" height="22" viewBox="0 0 22 22"><path d="M-2.75 -5.5 L2.75 0 L-2.75 5.5" transform="translate(11 11)" fill="none" stroke="#232629" stroke-width="1.1"/></svg>
<svg class="a" style="left:11.20px;top:459.20px;" width="17.6" height="17.6" viewBox="0 0 16 16"><circle cx="8" cy="8" r="7" fill="none" stroke="#232629" stroke-width="1.1"/><circle cx="8.5" cy="8.5" r="5.5" fill="#c8c9cb"/><path d="M3 3 L5 5" fill="none" stroke="#232629" stroke-width="1.1"/></svg>
<div class="t" style="font-size:13.33px;line-height:20px;height:20px;color:#232629;left:39.00px;top:459.17px;">Graphics</div>
<svg class="a" style="left:204.00px;top:457.00px;" width="22" height="22" viewBox="0 0 22 22"><path d="M-2.75 -5.5 L2.75 0 L-2.75 5.5" transform="translate(11 11)" fill="none" stroke="#232629" stroke-width="1.1"/></svg>
<svg class="a" style="left:11.20px;top:493.20px;" width="17.6" height="17.6" viewBox="0 0 16 16"><circle cx="8" cy="8" r="7" fill="none" stroke="#232629" stroke-width="1.1"/><path d="M2 5 C4 3 7 5 6 8 C5 10 3 10 2 9 Z M8 9 C10 8 13 9 14 11 C12 15 9 14 8 9 Z M9 1.5 C11 2 13 3 14 5 C11 5 10 3 9 1.5 Z" fill="#232629"/></svg>
<div class="t" style="font-size:13.33px;line-height:20px;height:20px;color:#232629;left:39.00px;top:493.17px;">Internet</div>
<svg class="a" style="left:204.00px;top:491.00px;" width="22" height="22" viewBox="0 0 22 22"><path d="M-2.75 -5.5 L2.75 0 L-2.75 5.5" transform="translate(11 11)" fill="none" stroke="#232629" stroke-width="1.1"/></svg>
<svg class="a" style="left:11.20px;top:527.20px;" width="17.6" height="17.6" viewBox="0 0 16 16"><rect x="1" y="1.5" width="14" height="10" fill="none" stroke="#232629" stroke-width="1.1"/><path d="M6 4 L10.5 6.5 L6 9 Z" fill="#232629"/><path d="M8 11.5 V14 M4.5 14.5 H11.5" stroke="#232629" stroke-width="1.6"/></svg>
<div class="t" style="font-size:13.33px;line-height:20px;height:20px;color:#232629;left:39.00px;top:527.17px;">Multimedia</div>
<svg class="a" style="left:204.00px;top:525.00px;" width="22" height="22" viewBox="0 0 22 22"><path d="M-2.75 -5.5 L2.75 0 L-2.75 5.5" transform="translate(11 11)" fill="none" stroke="#232629" stroke-width="1.1"/></svg>
<svg class="a" style="left:11.20px;top:561.20px;" width="17.6" height="17.6" viewBox="0 0 16 16"><path d="M2 3.5 H9 L11 1.5 H14 V15 H2 Z" fill="none" stroke="#232629" stroke-width="1.1"/><rect x="4.5" y="7" width="5" height="5" fill="none" stroke="#232629" stroke-width="1.1"/><path d="M11 4 V13" fill="none" stroke="#232629" stroke-width="1.1"/></svg>
<div class="t" style="font-size:13.33px;line-height:20px;height:20px;color:#232629;left:39.00px;top:561.17px;">Office</div>
<svg class="a" style="left:11.20px;top:595.20px;" width="17.6" height="17.6" viewBox="0 0 16 16"><path d="M5.5 1.5 H10.5 M6.5 1.5 V6.5 L2 14.5 H14 L9.5 6.5 V1.5" fill="none" stroke="#232629" stroke-width="1.1"/><path d="M4 11 H12 L13.5 14 H2.5 Z" fill="#232629"/></svg>
<div class="t" style="font-size:13.33px;line-height:20px;height:20px;color:#232629;left:39.00px;top:595.17px;">Science and Engineering</div>
<svg class="a" style="left:204.00px;top:593.00px;" width="22" height="22" viewBox="0 0 22 22"><path d="M-2.75 -5.5 L2.75 0 L-2.75 5.5" transform="translate(11 11)" fill="none" stroke="#232629" stroke-width="1.1"/></svg>
<svg class="a" style="left:11.20px;top:629.20px;" width="17.6" height="17.6" viewBox="0 0 16 16"><path d="M1 3.5 H15 M1 12.5 H15" fill="none" stroke="#232629" stroke-width="1.1"/><circle cx="8" cy="3.5" r="1.8" fill="#232629"/><circle cx="3" cy="12.5" r="1.8" fill="#fff" stroke="#232629" stroke-width="1.1"/></svg>
<div class="t" style="font-size:13.33px;line-height:20px;height:20px;color:#232629;left:39.00px;top:629.17px;">System Settings</div>
<svg class="a" style="left:11.20px;top:663.20px;" width="17.6" height="17.6" viewBox="0 0 16 16"><circle cx="8" cy="8" r="7" fill="none" stroke="#232629" stroke-width="1.1"/><circle cx="4.8" cy="8" r="1" fill="#232629"/><circle cx="8" cy="8" r="1" fill="#232629"/><circle cx="11.2" cy="8" r="1" fill="#232629"/></svg>
<div class="t" style="font-size:13.33px;line-height:20px;height:20px;color:#232629;left:39.00px;top:663.17px;">Application Addons</div>
<svg class="a" style="left:204.00px;top:661.00px;" width="22" height="22" viewBox="0 0 22 22"><path d="M-2.75 -5.5 L2.75 0 L-2.75 5.5" transform="translate(11 11)" fill="none" stroke="#232629" stroke-width="1.1"/></svg>
<svg class="a" style="left:11.20px;top:697.20px;" width="17.6" height="17.6" viewBox="0 0 16 16"><circle cx="3" cy="5" r="1" fill="#232629"/><circle cx="2" cy="10" r="1.3" fill="#232629"/><circle cx="6" cy="14" r="1.6" fill="#232629"/><circle cx="6" cy="2" r="0.8" fill="#232629"/><path d="M9 4 L13 8 L9 12" stroke="#232629" stroke-width="2" fill="none"/></svg>
<div class="t" style="font-size:13.33px;line-height:20px;height:20px;color:#232629;left:39.00px;top:697.17px;">Plasma Addons</div>
<svg class="a" style="left:204.00px;top:695.00px;" width="22" height="22" viewBox="0 0 22 22"><path d="M-2.75 -5.5 L2.75 0 L-2.75 5.5" transform="translate(11 11)" fill="none" stroke="#232629" stroke-width="1.1"/></svg>
<div class="t" style="font-size:18.67px;line-height:28px;height:28px;color:#232629;left:271.00px;top:84.37px;">Most Popular</div>
<div class="a" style="left:271.00px;top:121.00px;width:500px;height:94px;background:#fff;border:1px solid #d9dadc;border-radius:4px;box-shadow:0 1px 2px rgba(0,0,0,0.06);"></div>
<svg class="a" style="left:287.00px;top:136.00px;" width="64" height="64" viewBox="0 0 64 64"><defs><linearGradient id="vo" x1="0" y1="0" x2="1" y2="0"><stop offset="0" stop-color="#e86a00"/><stop offset="0.5" stop-color="#ff9d1a"/><stop offset="1" stop-color="#e06000"/></linearGradient></defs><path d="M2 62 L9 40 H55 L62 62 Z" fill="#f08a00"/><path d="M27 2 H37 L52 56 C45 60 19 60 12 56 Z" fill="url(#vo)"/><path d="M23 15 H41 L44 27 H20 Z" fill="#dcdcdc"/><path d="M18 33 H46 L50 47 H14 Z" fill="#dcdcdc"/></svg>
<div class="t" style="font-size:16px;line-height:24px;height:24px;color:#232629;font-weight:700;left:367.00px;top:138.62px;">VLC</div>
<div class="t" style="font-size:13.33px;line-height:20px;height:20px;color:#707378;left:367.00px;top:161.17px;">VLC media player, free and open-source multimedia</div>
<div class="t" style="font-size:13.33px;line-height:20px;height:20px;color:#707378;left:367.00px;top:179.17px;">source multimedia framework</div>
<div class="a" style="left:271.00px;top:235.00px;width:500px;height:94px;background:#fff;border:1px solid #d9dadc;border-radius:4px;box-shadow:0 1px 2px rgba(0,0,0,0.06);"></div>
<svg class="a" style="left:290.00px;top:253.00px;" width="58" height="58" viewBox="0 0 58 58"><circle cx="29" cy="29" r="28.5" fill="#1ed760"/><path d="M13 21 C22 17 36 17 46 22 M15 30 C23 27 34 27 42 31 M17 38 C24 36 32 36 38 39" fill="none" stroke="#191414" stroke-width="4.2" stroke-linecap="round"/></svg>
<div class="t" style="font-size:16px;line-height:24px;height:24px;color:#232629;font-weight:700;left:367.00px;top:261.62px;">Spotify</div>
<div class="t" style="font-size:13.33px;line-height:20px;height:20px;color:#707378;left:367.00px;top:284.17px;">Online music streaming service</div>
<div class="a" style="left:271.00px;top:349.00px;width:500px;height:94px;background:#fff;border:1px solid #d9dadc;border-radius:4px;box-shadow:0 1px 2px rgba(0,0,0,0.06);"></div>
<svg class="a" style="left:290.00px;top:367.00px;" width="58" height="58" viewBox="0 0 58 58"><defs><linearGradient id="tgg" x1="0" y1="0" x2="0" y2="1"><stop offset="0" stop-color="#2aabee"/><stop offset="1" stop-color="#229ed9"/></linearGradient></defs><circle cx="29" cy="29" r="28.5" fill="url(#tgg)"/><path d="M12 28 L43 16 L38 42 L28 35 L24 41 L23 33 Z" fill="#fff"/><path d="M23 33 L37 22 L28 35" fill="#d0e6f3"/></svg>
<div class="t" style="font-size:16px;line-height:24px;height:24px;color:#232629;font-weight:700;left:367.00px;top:375.62px;">Telegram Desktop</div>
<div class="t" style="font-size:13.33px;line-height:20px;height:20px;color:#707378;left:367.00px;top:399.17px;">Fast. Secure. Powerful.</div>
<div class="a" style="left:271.00px;top:463.00px;width:500px;height:94px;background:#fff;border:1px solid #d9dadc;border-radius:4px;box-shadow:0 1px 2px rgba(0,0,0,0.06);"></div>
<svg class="a" style="left:288.00px;top:480.00px;" width="60" height="60" viewBox="0 0 60 60"><circle cx="30" cy="30" r="26" fill="none" stroke="#8a7a3a" stroke-width="6"/><circle cx="30" cy="30" r="26" fill="none" stroke="#c8b060" stroke-width="2"/><path d="M30 4 V56 M4 30 H56" stroke="#8a7a3a" stroke-width="5"/><path d="M30 4 V56 M4 30 H56" stroke="#c0a858" stroke-width="1.6"/></svg>
<div class="t" style="font-size:16px;line-height:24px;height:24px;color:#232629;font-weight:700;left:367.00px;top:480.62px;">0 A.D.</div>
<div class="t" style="font-size:13.33px;line-height:20px;height:20px;color:#707378;left:367.00px;top:503.17px;">Real-Time Strategy Game of</div>
<div class="t" style="font-size:13.33px;line-height:20px;height:20px;color:#707378;left:367.00px;top:521.17px;">Ancient Warfare</div>
<div class="t" style="font-size:18.67px;line-height:28px;height:28px;color:#232629;left:271.00px;top:592.37px;">Newly Published &amp; Recently Updated</div>
<div class="a" style="left:271.00px;top:629.00px;width:500px;height:100px;background:#fff;border:1px solid #d9dadc;border-radius:4px;box-shadow:0 1px 2px rgba(0,0,0,0.06);"></div>
<svg class="a" style="left:287.00px;top:644.00px;" width="64" height="64" viewBox="0 0 64 64"><defs><linearGradient id="vkg" x1="0" y1="0" x2="1" y2="1"><stop offset="0" stop-color="#6d93dc"/><stop offset="0.5" stop-color="#3568c4"/><stop offset="1" stop-color="#1d4aa8"/></linearGradient></defs><path d="M2 1 L58 7 L59 50 L6 57 Z" fill="#e6e7e9" stroke="#b5b8bc" stroke-width="1"/><path d="M6 5 L55 10.5 L55.5 47 L9 52.5 Z" fill="url(#vkg)"/><path d="M30 8 L55 10.5 L55.5 47 L36 49.5 Z" fill="#5d8ee0" opacity="0.35"/><circle cx="23" cy="19" r="8.5" fill="#3a3d42" stroke="#cfd2d6" stroke-width="1.5"/><circle cx="23" cy="19" r="2" fill="#ddd"/><g stroke="#ddd" stroke-width="2"><path d="M23 12.5 V15 M23 23 V25.5 M16.5 19 H19 M27 19 H29.5"/></g><circle cx="41" cy="36" r="8.5" fill="#2b2e33" stroke="#9aa0a8" stroke-width="1.2"/><circle cx="41" cy="36" r="4.5" fill="#4a5058" stroke="#6d737b" stroke-width="1"/><path d="M30 13 L33 11" stroke="#2b2e33" stroke-width="2"/><rect x="24" y="56" width="13" height="5" fill="#c4c7cb"/><path d="M15 62 H46 L44 64 H17 Z" fill="#c9ccd0"/></svg>
<div class="t" style="font-size:16px;line-height:24px;height:24px;color:#232629;font-weight:700;left:367.00px;top:655.62px;">vokoscreenNG</div>
<div class="t" style="font-size:13.33px;line-height:20px;height:20px;color:#707378;left:367.00px;top:678.17px;">Easy to use screencast creator</div>
<div class="a" style="left:0;top:0;right:0;bottom:0;border:1px solid rgba(0,0,0,0.16);border-radius:5px 5px 0 0;"></div>
</div>
<div class="win" style="left:661px;top:281px;width:1002px;height:729px;box-shadow:0 0 1.5px rgba(0,0,0,0.5), 0 6px 28px rgba(0,0,0,0.34);">
<svg class="a" style="left:6.00px;top:6.00px;" width="17" height="17" viewBox="0 0 17 17"><rect x="0" y="0" width="17" height="17" rx="1" fill="#2d3136"/><path d="M0 9 C2 4 4 5 6 8 C8 11 10 10 12 9 C14 8 16 9 17 10 V17 H0 Z" fill="#4caf7f"/><path d="M0 12 C3 9 6 13 9 12 C12 11 15 13 17 12 V17 H0 Z" fill="#5cbc6a" opacity="0.8"/></svg>
<svg class="a" style="left:34.00px;top:7.50px;" width="12" height="12" viewBox="0 0 12 12"><g fill="#232629" stroke="#232629" stroke-linecap="round"><path d="M8 0.8 L10.8 3.6 L5 9 L2.3 6.2 Z" stroke-width="0.5"/><path d="M1.5 4.8 L6.4 9.8" stroke-width="1.2"/><path d="M4 7.4 L0.6 11" stroke-width="1.1"/></g></svg>
<div class="t" style="font-size:13.33px;line-height:20px;height:20px;color:#232629;left:200.00px;width:600px;text-align:center;top:5.17px;">Overview — System Monitor</div>
<svg class="a" style="left:933.00px;top:8.00px;" width="12" height="12" viewBox="0 0 12 12"><path d="M1 3.6 L6 8.6 L11 3.6" fill="none" stroke="#232629" stroke-width="1.15"/></svg>
<svg class="a" style="left:957.00px;top:8.00px;" width="12" height="12" viewBox="0 0 12 12"><path d="M1 8.4 L6 3.4 L11 8.4" fill="none" stroke="#232629" stroke-width="1.15"/></svg>
<svg class="a" style="left:981.00px;top:8.00px;" width="12" height="12" viewBox="0 0 12 12"><path d="M1.9 1.9 L10.1 10.1 M10.1 1.9 L1.9 10.1" fill="none" stroke="#232629" stroke-width="1.15"/></svg>
<svg class="a" style="left:16.00px;top:41.00px;" width="17" height="15" viewBox="0 0 17 15"><path d="M5 3 V0.8 H12 V3" fill="none" stroke="#232629" stroke-width="1.6"/><rect x="0" y="3" width="17" height="12" fill="#232629"/><rect x="0" y="8" width="17" height="1.3" fill="#eff0f1"/><rect x="6" y="7.2" width="5" height="3" fill="#eff0f1"/><rect x="7" y="8" width="3" height="1.3" fill="#232629"/></svg>
<div class="t" style="font-size:13.33px;line-height:20px;height:20px;color:#232629;left:40.00px;top:39.17px;">Tools</div>
<svg class="a" style="left:77.00px;top:38.50px;" width="20" height="20" viewBox="0 0 20 20"><path d="M-5.0 -2.5 L0 2.5 L5.0 -2.5" transform="translate(10 10)" fill="none" stroke="#232629" stroke-width="1.1"/></svg>
<svg class="a" style="left:152.00px;top:42.00px;" width="16" height="12" viewBox="0 0 16 12"><g fill="#232629"><rect x="0" y="0" width="16" height="2"/><rect x="0" y="5" width="16" height="2"/><rect x="0" y="10" width="16" height="2"/></g></svg>
<div class="a" style="left:181.00px;top:35.00px;width:1px;height:26px;background:#c9cacc;"></div>
<div class="t" style="font-size:18.67px;line-height:28px;height:28px;color:#232629;left:199.00px;top:34.87px;">Overview</div>
<svg class="a" style="left:906.00px;top:39.00px;" width="18" height="18" viewBox="0 0 18 18"><g fill="none" stroke="#232629" stroke-width="1.2"><path d="M2 16 L2.5 12.5 L12.5 2.5 L15.5 5.5 L5.5 15.5 Z"/><path d="M10.5 4.5 L13.5 7.5"/></g><path d="M12.5 2.5 L14 1 L17 4 L15.5 5.5 Z" fill="#232629"/></svg>
<div class="t" style="font-size:13.33px;line-height:20px;height:20px;color:#232629;left:930.00px;top:39.17px;">Edit Page</div>
<div class="a" style="left:0.00px;top:67.00px;width:1002px;height:1px;background:#c9cacc;"></div>
<div class="a" style="left:1.00px;top:68.00px;width:180px;height:661px;background:#fff;"></div>
<div class="a" style="left:181.00px;top:68.00px;width:1px;height:661px;background:#d6d7d8;"></div>
<div class="a" style="left:5.00px;top:71.00px;width:172px;height:28px;background:#d7daeb;border-radius:3px;"></div>
<svg class="a" style="left:11.20px;top:76.20px;" width="17.6" height="17.6" viewBox="0 0 16 16"><g transform="scale(0.6667)"><circle cx="12" cy="12" r="10.7" fill="none" stroke="#232629" stroke-width="1.7"/><path d="M7.9 6.7 A6.7 6.7 0 0 1 18.7 11.6" fill="none" stroke="#232629" stroke-width="1.7" stroke-linecap="round"/><ellipse cx="5.8" cy="10.4" rx="1.1" ry="1.5" fill="#232629"/><path d="M10.5 17.4 C10.8 18.6 13 18.8 13.4 17.4 L14 8.4 Z" fill="#232629"/></g></svg>
<div class="t" style="font-size:13.33px;line-height:20px;height:20px;color:#232629;left:39.00px;top:76.17px;">Overview</div>
<svg class="a" style="left:11.20px;top:110.20px;" width="17.6" height="17.6" viewBox="0 0 16 16"><rect x="1.5" y="1.5" width="5" height="5" fill="none" stroke="#232629" stroke-width="1.1"/><rect x="9.5" y="1.5" width="5" height="5" fill="none" stroke="#232629" stroke-width="1.1"/><rect x="1.5" y="9.5" width="5" height="5" fill="none" stroke="#232629" stroke-width="1.1"/><rect x="9.5" y="9.5" width="5" height="5" fill="none" stroke="#232629" stroke-width="1.1"/></svg>
<div class="t" style="font-size:13.33px;line-height:20px;height:20px;color:#232629;left:39.00px;top:110.17px;">Applications</div>
<svg class="a" style="left:11.20px;top:144.20px;" width="17.6" height="17.6" viewBox="0 0 16 16"><path d="M1 1 V15 H16" fill="none" stroke="#232629" stroke-width="1.1"/><path d="M1.5 8 L5 12 L8 9 L12 13 L15 14 M1.5 11 L6 5 L9 8 L15 2" fill="none" stroke="#232629" stroke-width="1.1"/></svg>
<div class="t" style="font-size:13.33px;line-height:20px;height:20px;color:#232629;left:39.00px;top:144.17px;">History</div>
<svg class="a" style="left:11.20px;top:178.20px;" width="17.6" height="17.6" viewBox="0 0 16 16"><rect x="1" y="1" width="14" height="14" fill="none" stroke="#232629" stroke-width="1.1"/><rect x="1" y="1" width="14" height="3" fill="#232629"/><path d="M6 7.5 L11 10 L6 12.5 Z" fill="#232629"/></svg>
<div class="t" style="font-size:13.33px;line-height:20px;height:20px;color:#232629;left:39.00px;top:178.17px;">Processes</div>
<svg class="a" style="left:11.20px;top:212.20px;" width="17.6" height="17.6" viewBox="0 0 16 16"><path d="M8 1 V15 M1 8 H15" fill="none" stroke="#232629" stroke-width="1.1"/></svg>
<div class="t" style="font-size:13.33px;line-height:20px;height:20px;color:#232629;left:39.00px;top:212.17px;">Add New Page…</div>
<div class="a" style="left:197.00px;top:86.00px;width:256px;height:179px;background:#fff;border:1px solid #dadbdd;border-radius:4px;box-shadow:0 1px 2px rgba(0,0,0,0.05);"></div>
<div class="t" style="font-size:17.3px;line-height:26px;height:26px;color:#232629;left:205.50px;width:240px;text-align:center;top:92.35px;">Memory</div>
<svg class="a" style="left:257.50px;top:123.00px;" width="136" height="136" viewBox="0 0 136 136"><circle cx="68.0" cy="68.0" r="63" fill="none" stroke="#e5e6e8" stroke-width="8"/><path d="M64.00 130.87 A63 63 0 0 1 9.44 91.23" fill="none" stroke="#a2a9d6" stroke-width="8" stroke-linecap="round"/></svg>
<div class="t" style="font-size:11.5px;line-height:17px;height:17px;color:#7b8392;left:266.00px;width:120px;text-align:center;top:158.63px;">Used</div>
<div class="t" style="font-size:13px;line-height:20px;height:20px;color:#232629;left:266.00px;width:120px;text-align:center;top:173.16px;">3.1 GiB</div>
<div class="a" style="left:301.00px;top:191.00px;width:50px;height:1px;background:#c9cacc;"></div>
<div class="t" style="font-size:13px;line-height:20px;height:20px;color:#232629;left:266.00px;width:120px;text-align:center;top:192.16px;">15.5 GiB</div>
<div class="t" style="font-size:11.5px;line-height:17px;height:17px;color:#7b8392;left:266.00px;width:120px;text-align:center;top:210.63px;">Total</div>
<div class="a" style="left:463.00px;top:86.00px;width:256px;height:179px;background:#fff;border:1px solid #dadbdd;border-radius:4px;box-shadow:0 1px 2px rgba(0,0,0,0.05);"></div>
<div class="t" style="font-size:17.3px;line-height:26px;height:26px;color:#232629;left:471.50px;width:240px;text-align:center;top:92.35px;">Disk</div>
<svg class="a" style="left:523.50px;top:123.00px;" width="136" height="136" viewBox="0 0 136 136"><circle cx="68.0" cy="68.0" r="63" fill="none" stroke="#e5e6e8" stroke-width="8"/><path d="M64.00 130.87 A63 63 0 0 1 36.42 122.51" fill="none" stroke="#a2a9d6" stroke-width="8" stroke-linecap="round"/></svg>
<div class="t" style="font-size:11.5px;line-height:17px;height:17px;color:#7b8392;left:531.00px;width:120px;text-align:center;top:158.63px;">Used Space</div>
<div class="t" style="font-size:13px;line-height:20px;height:20px;color:#232629;left:531.00px;width:120px;text-align:center;top:173.16px;">85.7 GiB</div>
<div class="a" style="left:561.00px;top:191.00px;width:60px;height:1px;background:#c9cacc;"></div>
<div class="t" style="font-size:13px;line-height:20px;height:20px;color:#232629;left:531.00px;width:120px;text-align:center;top:192.16px;">914.8 GiB</div>
<div class="t" style="font-size:11.5px;line-height:17px;height:17px;color:#7b8392;left:531.00px;width:120px;text-align:center;top:210.63px;">Total Space</div>
<div class="a" style="left:728.00px;top:86.00px;width:256px;height:179px;background:#fff;border:1px solid #dadbdd;border-radius:4px;box-shadow:0 1px 2px rgba(0,0,0,0.05);"></div>
<div class="t" style="font-size:17.3px;line-height:26px;height:26px;color:#232629;left:736.50px;width:240px;text-align:center;top:92.35px;">CPU</div>
<svg class="a" style="left:788.50px;top:123.00px;" width="136" height="136" viewBox="0 0 136 136"><circle cx="68.0" cy="68.0" r="63" fill="none" stroke="#e5e6e8" stroke-width="8"/><path d="M64.00 130.87 A63 63 0 0 1 51.23 128.73" fill="none" stroke="#a2a9d6" stroke-width="8" stroke-linecap="round"/></svg>
<div class="t" style="font-size:13px;line-height:20px;height:20px;color:#232629;left:797.00px;width:120px;text-align:center;top:182.16px;">5.3%</div>
<div class="t" style="font-size:16.5px;line-height:25px;height:25px;color:#232629;left:197.00px;top:275.13px;">Network &amp; System</div>
<div class="a" style="left:197.00px;top:309.00px;width:787px;height:178px;background:#fff;border:1px solid #dadbdd;border-radius:4px;box-shadow:0 1px 2px rgba(0,0,0,0.05);"></div>
<div class="a" style="left:459.00px;top:316.00px;width:1px;height:164px;background:#d6d7d8;"></div>
<div class="a" style="left:722.00px;top:316.00px;width:1px;height:164px;background:#d6d7d8;"></div>
<div class="t" style="font-size:16.5px;line-height:25px;height:25px;color:#232629;left:208.00px;width:240px;text-align:center;top:315.13px;">Networks</div>
<div class="t" style="font-size:16.5px;line-height:25px;height:25px;color:#232629;left:471.00px;width:240px;text-align:center;top:315.13px;">Network Rates</div>
<div class="t" style="font-size:14.5px;line-height:22px;height:22px;color:#232629;left:205.00px;top:377.19px;letter-spacing:0.55px;">Flippynet</div>
<div class="a" style="left:205.00px;top:402.00px;width:5px;height:17px;background:#a2a9d6;"></div>
<div class="t" style="font-size:13.33px;line-height:20px;height:20px;color:#232629;left:214.00px;top:402.17px;">IPv4</div>
<div class="t" style="font-size:13.33px;line-height:20px;height:20px;color:#232629;left:226.00px;width:220px;text-align:right;top:402.17px;">192.168.1.156</div>
<div class="a" style="left:205.00px;top:424.00px;width:5px;height:17px;background:#d3c99c;"></div>
<div class="t" style="font-size:13.33px;line-height:20px;height:20px;color:#232629;left:214.00px;top:424.17px;">IPv6</div>
<div class="t" style="font-size:13.33px;line-height:20px;height:20px;color:#232629;left:226.00px;width:220px;text-align:right;top:424.17px;">fe80::a510:c002:7005:8069</div>
<div class="t" style="font-size:14.5px;line-height:22px;height:22px;color:#232629;left:468.00px;top:377.19px;letter-spacing:0.55px;">Flippynet</div>
<div class="a" style="left:468.00px;top:402.00px;width:5px;height:17px;background:#a2a9d6;"></div>
<div class="t" style="font-size:13.33px;line-height:20px;height:20px;color:#232629;left:477.00px;top:402.17px;">Download</div>
<div class="t" style="font-size:13.33px;line-height:20px;height:20px;color:#232629;left:489.00px;width:220px;text-align:right;top:402.17px;">132 B/s</div>
<div class="a" style="left:468.00px;top:424.00px;width:5px;height:17px;background:#d3c99c;"></div>
<div class="t" style="font-size:13.33px;line-height:20px;height:20px;color:#232629;left:477.00px;top:424.17px;">Upload</div>
<div class="t" style="font-size:13.33px;line-height:20px;height:20px;color:#232629;left:489.00px;width:220px;text-align:right;top:424.17px;">172 B/s</div>
<div class="a" style="left:731.00px;top:356.00px;width:5px;height:18px;background:#a2a9d6;"></div>
<div class="t" style="font-size:13.33px;line-height:20px;height:20px;color:#232629;left:740.00px;top:356.17px;">Hostname</div>
<div class="a" style="left:731.00px;top:378.00px;width:5px;height:18px;background:#d3a0d8;"></div>
<div class="t" style="font-size:13.33px;line-height:20px;height:20px;color:#232629;left:740.00px;top:378.17px;">OS</div>
<div class="a" style="left:731.00px;top:400.00px;width:5px;height:18px;background:#d5a8a0;"></div>
<div class="t" style="font-size:13.33px;line-height:20px;height:20px;color:#232629;left:740.00px;top:400.17px;">KDE Plasma</div>
<div class="a" style="left:731.00px;top:422.00px;width:5px;height:18px;background:#bdd6a0;"></div>
<div class="t" style="font-size:13.33px;line-height:20px;height:20px;color:#232629;left:740.00px;top:422.17px;">KDE Frameworks</div>
<div class="a" style="left:731.00px;top:444.00px;width:5px;height:18px;background:#9ed6bd;"></div>
<div class="t" style="font-size:13.33px;line-height:20px;height:20px;color:#232629;left:740.00px;top:444.17px;">Qt Version</div>
<div class="t" style="font-size:16.5px;line-height:25px;height:25px;color:#232629;left:197.00px;top:497.13px;">Applications</div>
<div class="a" style="left:197.00px;top:530.00px;width:787px;height:180px;background:#fff;border-radius:4px;box-shadow:0 0 0 1px rgba(0,0,0,0.06);"></div>
<div class="a" style="left:197.00px;top:530.00px;width:787px;height:30px;background:#fafafa;border-radius:4px 4px 0 0;"></div>
<div class="a" style="left:197.00px;top:559.00px;width:787px;height:1px;background:#d4d5d6;"></div>
<div class="a" style="left:433.00px;top:530.00px;width:1px;height:30px;background:#dcdddf;"></div>
<div class="a" style="left:509.00px;top:530.00px;width:1px;height:30px;background:#dcdddf;"></div>
<div class="a" style="left:593.00px;top:530.00px;width:1px;height:30px;background:#dcdddf;"></div>
<div class="a" style="left:685.00px;top:530.00px;width:1px;height:30px;background:#dcdddf;"></div>
<div class="a" style="left:777.00px;top:530.00px;width:1px;height:30px;background:#dcdddf;"></div>
<div class="t" style="font-size:13.33px;line-height:20px;height:20px;color:#232629;left:215.00px;width:200px;text-align:center;top:536.17px;">Name</div>
<div class="t" style="font-size:13.33px;line-height:20px;height:20px;color:#232629;left:436.00px;width:70px;text-align:center;top:536.17px;">CPU</div>
<div class="t" style="font-size:13.33px;line-height:20px;height:20px;color:#232629;left:504.00px;width:80px;text-align:center;top:536.17px;">Memory</div>
<svg class="a" style="left:572.00px;top:535.00px;" width="20" height="20" viewBox="0 0 20 20"><path d="M-5.0 -2.5 L0 2.5 L5.0 -2.5" transform="translate(10 10)" fill="none" stroke="#232629" stroke-width="1.0"/></svg>
<div class="t" style="font-size:13.33px;line-height:20px;height:20px;color:#232629;left:594.00px;width:90px;text-align:center;top:536.17px;">Download</div>
<div class="t" style="font-size:13.33px;line-height:20px;height:20px;color:#232629;left:686.00px;width:90px;text-align:center;top:536.17px;">Upload</div>
<div class="t" style="font-size:13.33px;line-height:20px;height:20px;color:#232629;left:809.50px;top:536.17px;">Disk Read</div>
<div class="a" style="left:197.00px;top:560.00px;width:787px;height:30px;background:#f1f2f7;"></div>
<div class="t" style="font-size:13.33px;line-height:20px;height:20px;color:#232629;left:232.00px;top:566.17px;">Calendar Reminders</div>
<div class="t" style="font-size:13.33px;line-height:20px;height:20px;color:#232629;left:511.00px;width:80px;text-align:center;top:566.17px;">733.3 MiB</div>
<div class="a" style="left:197.00px;top:590.00px;width:787px;height:30px;background:#f7f7f7;"></div>
<div class="t" style="font-size:13.33px;line-height:20px;height:20px;color:#232629;left:232.00px;top:596.17px;">Discover</div>
<div class="t" style="font-size:13.33px;line-height:20px;height:20px;color:#232629;left:511.00px;width:80px;text-align:center;top:596.17px;">588.0 MiB</div>
<div class="a" style="left:197.00px;top:620.00px;width:787px;height:30px;background:#ffffff;"></div>
<div class="t" style="font-size:13.33px;line-height:20px;height:20px;color:#232629;left:232.00px;top:626.17px;">System Monitor</div>
<div class="t" style="font-size:13.33px;line-height:20px;height:20px;color:#232629;left:436.00px;width:70px;text-align:center;top:626.17px;">0.4%</div>
<div class="t" style="font-size:13.33px;line-height:20px;height:20px;color:#232629;left:511.00px;width:80px;text-align:center;top:626.17px;">166.1 MiB</div>
<div class="a" style="left:197.00px;top:650.00px;width:787px;height:30px;background:#f7f7f7;"></div>
<div class="t" style="font-size:13.33px;line-height:20px;height:20px;color:#232629;left:232.00px;top:656.17px;">System Settings</div>
<div class="t" style="font-size:13.33px;line-height:20px;height:20px;color:#232629;left:511.00px;width:80px;text-align:center;top:656.17px;">115.5 MiB</div>
<div class="a" style="left:197.00px;top:680.00px;width:787px;height:30px;background:#ffffff;border-radius:0 0 4px 4px;"></div>
<div class="t" style="font-size:13.33px;line-height:20px;height:20px;color:#232629;left:232.00px;top:686.17px;">KDE Connect</div>
<div class="t" style="font-size:13.33px;line-height:20px;height:20px;color:#232629;left:511.00px;width:80px;text-align:center;top:686.17px;">36.1 MiB</div>
<div class="t" style="font-size:13.33px;line-height:20px;height:20px;color:#232629;left:594.00px;width:90px;text-align:center;top:686.17px;">68.0 B/s</div>
<div class="t" style="font-size:13.33px;line-height:20px;height:20px;color:#232629;left:686.00px;width:90px;text-align:center;top:686.17px;">68.0 B/s</div>
<svg class="a" style="left:207.00px;top:566.00px;" width="18" height="18" viewBox="0 0 18 18"><path d="M9 2 C5 2 4 5 4 8 V12 L2.5 14 H15.5 L14 12 V8 C14 5 13 2 9 2 Z" fill="none" stroke="#232629" stroke-width="1.1"/><circle cx="9" cy="15.5" r="1.6" fill="#232629"/></svg>
<svg class="a" style="left:207.00px;top:596.00px;" width="18" height="18" viewBox="0 0 18 18"><defs><linearGradient id="dg2" x1="0" y1="0" x2="0" y2="1"><stop offset="0" stop-color="#1ab0f5"/><stop offset="1" stop-color="#1d7ef0"/></linearGradient></defs><path d="M6 4 C6 0.8 12 0.8 12 4" fill="none" stroke="#5ab8f0" stroke-width="1"/><rect x="1" y="3.5" width="16" height="14.5" fill="url(#dg2)"/><path d="M9 9 L11 11 L9 13" fill="none" stroke="#fff" stroke-width="1"/></svg>
<svg class="a" style="left:206.00px;top:625.00px;" width="19" height="19" viewBox="0 0 19 19"><rect x="0" y="0" width="19" height="19" fill="#2d3136"/><path d="M0 8 C2 4 4 5 6 8 C8 12 11 11 13 10 C15 9 17 10 19 11 V19 H0 Z" fill="#4caf7f"/><path d="M0 13 C3 10 7 14 10 13 C13 12 16 14 19 13 V19 H0 Z" fill="#5cbc6a" opacity="0.8"/></svg>
<svg class="a" style="left:206.00px;top:655.00px;" width="19" height="19" viewBox="0 0 19 19"><rect x="0" y="0" width="19" height="19" fill="#25282b"/><path d="M3 6.5 H13" stroke="#9aa6e8" stroke-width="1.3"/><path d="M13 6.5 H16" stroke="#666" stroke-width="1"/><circle cx="13" cy="6.5" r="1.6" fill="#fff"/><path d="M3 12.5 H7" stroke="#9aa6e8" stroke-width="1.3"/><path d="M7 12.5 H16" stroke="#666" stroke-width="1"/><circle cx="7" cy="12.5" r="1.6" fill="#fff"/></svg>
<svg class="a" style="left:210.00px;top:685.00px;" width="11" height="20" viewBox="0 0 11 20"><rect x="0.5" y="0.5" width="10" height="19" rx="1" fill="#232629"/><rect x="1.5" y="2" width="8" height="15" fill="#e8e9ea"/><path d="M4 8 L6 10 L4 12" fill="none" stroke="#888" stroke-width="1"/></svg>
<div class="a" style="left:0;top:0;right:0;bottom:0;border:1px solid rgba(0,0,0,0.16);border-radius:5px 5px 0 0;"></div>
</div>
<div class="a" style="left:1472px;top:580px;width:440px;height:440px;overflow:hidden;border-radius:5px;background:linear-gradient(120deg,#ecebf0 0%,#e6e4f1 45%,#e3e1f1 100%);box-shadow:0 0 0 1px rgba(0,0,0,0.18),0 3px 14px rgba(0,0,0,0.3);">
<div class="a" style="left:0.00px;top:0.00px;width:440px;height:37px;background:#e1e1e5;"></div>
<div class="a" style="left:0.00px;top:37.00px;width:440px;height:1px;background:#c3c4c8;"></div>
<svg class="a" style="left:2.00px;top:2.00px;" width="34" height="34" viewBox="0 0 34 34"><path d="M4.25 -8.5 L-4.25 0 L4.25 8.5" transform="translate(17 17)" fill="none" stroke="#232629" stroke-width="1.1"/></svg>
<div class="t" style="font-size:18.8px;line-height:28px;height:28px;color:#232629;left:40.00px;top:5.88px;">Power and Battery</div>
<svg class="a" style="left:343.00px;top:13.00px;" width="16" height="12" viewBox="0 0 16 12"><g fill="#232629"><rect x="0" y="0" width="16" height="2"/><rect x="0" y="5" width="16" height="2"/><rect x="0" y="10" width="16" height="2"/></g></svg>
<svg class="a" style="left:377.00px;top:10.00px;" width="18" height="18" viewBox="0 0 18 18"><path d="M1 3.5 H17 M6 13.5 H17" stroke="#232629" stroke-width="1.2"/><circle cx="9.5" cy="3.5" r="2.2" fill="#232629"/><circle cx="3.5" cy="13.5" r="2" fill="#e1e1e5" stroke="#232629" stroke-width="1.2"/></svg>
<svg class="a" style="left:414.00px;top:11.00px;" width="16" height="16" viewBox="0 0 16 16"><g fill="#232629" stroke="#232629" stroke-linecap="round" transform="scale(1.33)"><path d="M8 0.8 L10.8 3.6 L5 9 L2.3 6.2 Z" stroke-width="0.45"/><path d="M1.5 4.8 L6.4 9.8" stroke-width="1.0"/><path d="M4 7.4 L0.6 11" stroke-width="0.9"/></g></svg>
<svg class="a" style="left:14.00px;top:52.00px;" width="24" height="24" viewBox="0 0 24 24"><circle cx="12" cy="12" r="10.9" fill="none" stroke="#232629" stroke-width="1.4"/><path d="M7.9 6.7 A6.7 6.7 0 0 1 18.7 11.6" fill="none" stroke="#232629" stroke-width="1.4" stroke-linecap="round"/><ellipse cx="5.8" cy="10.4" rx="0.9" ry="1.3" fill="#232629"/><path d="M10.7 17.4 C11 18.4 12.8 18.6 13.2 17.4 L13.9 8.6 Z" fill="#232629"/></svg>
<div class="t" style="font-size:13.6px;line-height:20px;height:20px;color:#232629;left:60.00px;top:48.17px;">Power Profile</div>
<div class="a" style="left:60.00px;top:77.00px;width:370px;height:6px;background:#dcdbe3;border:1px solid #d0d0d8;border-radius:3px;"></div>
<div class="a" style="left:60.00px;top:77.00px;width:186px;height:6px;background:#c9cdeb;border:1px solid #a2a9d6;border-radius:3px;"></div>
<div class="a" style="left:70.00px;top:85.00px;width:1px;height:6px;background:#a2a9d6;"></div>
<div class="a" style="left:419.00px;top:85.00px;width:1px;height:6px;background:#9a9aa0;"></div>
<div class="a" style="left:235.50px;top:70.50px;width:19px;height:19px;background:#fcfcfc;border:1px solid #c8c8cc;border-radius:50%;box-shadow:0 1px 2px rgba(0,0,0,0.15);"></div>
<svg class="a" style="left:61.00px;top:96.00px;" width="19" height="18" viewBox="0 0 19 18"><path d="M1 17 L6 12 M5 13 C3 8 8 2 17 1 C17 9 12 14 6 12 M6 12 L12 6" fill="none" stroke="#232629" stroke-width="1.1"/></svg>
<svg class="a" style="left:409.00px;top:95.00px;" width="19" height="19" viewBox="0 0 19 19"><g fill="none" stroke="#232629" stroke-width="1.1" stroke-linejoin="round"><path d="M5.5 13.5 C5 9 9 3 17.5 1.5 C16 10 10 14 5.5 13.5 Z"/><circle cx="12" cy="7" r="1.7"/><path d="M6.5 8.5 L3 9 L1.5 11 L5 11.5 M10.5 12.5 L10 16 L8 17.5 L7.5 14"/><path d="M5 14 L1.5 17.5"/></g></svg>
<svg class="a" style="left:12.00px;top:141.00px;" width="28" height="15" viewBox="0 0 28 15"><rect x="1.6" y="1.6" width="23.8" height="11.8" fill="none" stroke="#232629" stroke-width="1.2"/><rect x="3.2" y="3.2" width="20.6" height="8.6" fill="#232629"/><rect x="25.6" y="4.8" width="1.4" height="5.4" fill="#232629"/><path d="M9.6 7.5 C9.6 5.2 12.2 4.8 13.6 4.8 V10.2 C12.2 10.2 9.6 9.8 9.6 7.5 Z" fill="#2ecc71"/><rect x="13.4" y="5.6" width="2.6" height="1.3" fill="#2ecc71"/><rect x="13.4" y="8.1" width="2.6" height="1.3" fill="#2ecc71"/></svg>
<div class="t" style="font-size:13.6px;line-height:20px;height:20px;color:#232629;left:60.00px;top:132.67px;">Battery 2</div>
<div class="t" style="font-size:13.6px;line-height:20px;height:20px;color:#707378;left:241.00px;width:150px;text-align:right;top:132.67px;">Fully Charged</div>
<div class="t" style="font-size:13.6px;line-height:20px;height:20px;color:#232629;left:370.00px;width:60px;text-align:right;top:132.67px;">100%</div>
<div class="a" style="left:60.00px;top:157.00px;width:370px;height:6px;background:#c9cdeb;border:1px solid #a2a9d6;border-radius:3px;"></div>
<div class="t" style="font-size:11.8px;line-height:18px;height:18px;color:#7d8085;left:60.00px;top:174.14px;">Battery Health:</div>
<div class="t" style="font-size:11.8px;line-height:18px;height:18px;color:#7d8085;left:370.00px;width:60px;text-align:right;top:174.14px;">83%</div>
<svg class="a" style="left:14.00px;top:204.00px;" width="24" height="25" viewBox="0 0 24 25"><rect x="1.5" y="16" width="9" height="7" fill="#232629"/><path d="M3.4 16.5 V14.8 C3.4 11.8 8.6 11.8 8.6 14.8 V16.5" fill="none" stroke="#232629" stroke-width="1.4"/><path d="M12.6 5.8 H16 L12.6 10.2 H16" fill="none" stroke="#232629" stroke-width="1.6" stroke-linejoin="miter"/><path d="M17.6 2.4 H22.4 L17.6 6.6 H22.4" fill="none" stroke="#232629" stroke-width="1.6" stroke-linejoin="miter"/></svg>
<div class="t" style="font-size:13.6px;line-height:20px;height:20px;color:#232629;left:60.00px;top:201.67px;">Sleep and Screen Locking after Inactivity</div>
<div class="t" style="font-size:13.6px;line-height:20px;height:20px;color:#232629;left:330.00px;width:100px;text-align:right;top:201.67px;">Automatic</div>
<div class="a" style="left:307.00px;top:224.00px;width:122px;height:28px;background:#fdfdfd;border:1px solid #d6d6dc;border-radius:3px;box-shadow:0 1px 2px rgba(0,0,0,0.12);"></div>
<svg class="a" style="left:313.00px;top:231.00px;" width="14" height="14" viewBox="0 0 14 14"><circle cx="7" cy="7" r="5.6" fill="none" stroke="#232629" stroke-width="1.3"/><path d="M3 3 L11 11" stroke="#232629" stroke-width="1.3"/></svg>
<div class="t" style="font-size:13.6px;line-height:20px;height:20px;color:#232629;left:332.00px;top:229.17px;">Manually Block</div>
</div>
<div class="a" style="left:8px;top:1028px;width:1904px;height:44px;overflow:hidden;border-radius:6px;background:linear-gradient(90deg,#d3e6f2 0px,#d8e2ef 110px,#e6e1ea 200px,#efe1e6 300px,#f2e0d6 480px,#f2e0d8 800px,#f0e1e2 900px,#f2dfd4 1000px,#f1e0dc 1160px,#efe1e6 1210px,#e6e2ef 1250px,#e0e3f2 1300px,#e0e4f3 1904px);">
<svg class="a" style="left:12.00px;top:9.00px;" width="30" height="28" viewBox="0 0 30 28"><circle cx="8.1" cy="2.8" r="1.5" fill="#232629"/><circle cx="4.5" cy="12.2" r="2.1" fill="#232629"/><circle cx="11" cy="21.7" r="3" fill="#232629"/><path d="M16.2 2.6 L23.2 8.9 L16.2 15.2" fill="none" stroke="#232629" stroke-width="3.6" stroke-linejoin="miter"/></svg>
<div class="a" style="left:49.00px;top:4.00px;width:30px;height:17px;background:#a4acd9;"></div>
<div class="a" style="left:49.00px;top:4.00px;width:15px;height:12px;background:#8d96c4;"></div>
<div class="a" style="left:52.00px;top:8.00px;width:15px;height:11px;background:#7e86b8;opacity:0.85;"></div>
<div class="a" style="left:59.00px;top:8.00px;width:15px;height:11px;background:#7881b6;opacity:0.7;"></div>
<div class="a" style="left:80.00px;top:4.00px;width:30px;height:17px;background:#c8d5df;"></div>
<div class="a" style="left:49.00px;top:22.00px;width:30px;height:17px;background:#c5d3de;"></div>
<div class="a" style="left:80.00px;top:22.00px;width:30px;height:17px;background:#c8d4de;"></div>
<div class="a" style="left:116.00px;top:0.00px;width:50px;height:44px;background:#c6cdd7;"></div>
<div class="a" style="left:116.00px;top:0.00px;width:50px;height:3px;background:#a9adb4;"></div>
<div class="a" style="left:168.00px;top:0.00px;width:50px;height:44px;background:#cdcbd8;"></div>
<div class="a" style="left:168.00px;top:0.00px;width:50px;height:3px;background:#b0aebb;"></div>
<div class="a" style="left:428.00px;top:0.00px;width:50px;height:44px;background:#d5c7c2;"></div>
<div class="a" style="left:428.00px;top:0.00px;width:50px;height:3px;background:#b4a9a6;"></div>
<svg class="a" style="left:126.00px;top:8.00px;" width="29" height="28" viewBox="0 0 29 28"><rect x="0" y="0" width="29" height="28" fill="#25282c"/><path d="M0 0 L29 28 H0 Z" fill="#2f3337" opacity="0.5"/><path d="M4 9.5 H21" stroke="#a9b2f0" stroke-width="1.6"/><path d="M21 9.5 H25" stroke="#555" stroke-width="1"/><circle cx="21" cy="9.5" r="2.4" fill="#fff"/><path d="M4 18 H10" stroke="#a9b2f0" stroke-width="1.6"/><path d="M10 18 H25" stroke="#555" stroke-width="1"/><circle cx="10" cy="18" r="2.4" fill="#fff"/></svg>
<svg class="a" style="left:180.00px;top:6.00px;" width="26" height="30" viewBox="0 0 26 30"><defs><linearGradient id="tdg" x1="0" y1="0" x2="0" y2="1"><stop offset="0" stop-color="#17b2f7"/><stop offset="1" stop-color="#1e7eef"/></linearGradient></defs><path d="M8 8 C8 1 18 1 18 8" fill="none" stroke="#5cc0f2" stroke-width="1.3"/><rect x="1" y="6" width="24" height="24" fill="url(#tdg)"/><rect x="1" y="6" width="24" height="2.5" fill="#0e5c98"/><path d="M14 14 L17 17 L14 20" fill="none" stroke="#fff" stroke-width="1.5"/><circle cx="10" cy="17.5" r="0.9" fill="#fff"/><circle cx="11.5" cy="22" r="0.9" fill="#fff"/><circle cx="12" cy="12" r="0.7" fill="#fff"/></svg>
<svg class="a" style="left:230.00px;top:8.00px;" width="29" height="26" viewBox="0 0 29 26"><path d="M1 1 H11 L13 3 H28 V26 H1 Z" fill="#7d85a8"/><rect x="2" y="5" width="26" height="6" fill="#f8f8fa"/><path d="M1 9 H28 V26 H1 Z" fill="#9aa2c8"/><path d="M1 9 L28 26 H1 Z" fill="#8b93bc" opacity="0.5"/></svg>
<svg class="a" style="left:281.00px;top:5.00px;" width="32" height="32" viewBox="0 0 32 32"><defs><radialGradient id="ffg" cx="0.35" cy="0.7" r="0.8"><stop offset="0" stop-color="#ffbd4f"/><stop offset="0.5" stop-color="#ff5e3a"/><stop offset="1" stop-color="#e2246a"/></radialGradient><radialGradient id="ffp" cx="0.5" cy="0.5" r="0.5"><stop offset="0" stop-color="#7b3ff2"/><stop offset="1" stop-color="#5a2ed0"/></radialGradient></defs><path d="M16 31 C6 31 1 24 1 17 C1 11 4 7 7 5 C6 9 8 11 10 11 C11 7 14 4 18 1 C18 5 22 6 26 9 C30 12 31 16 31 18 C31 26 25 31 16 31 Z" fill="url(#ffg)"/><circle cx="16.5" cy="18" r="7" fill="url(#ffp)"/><path d="M4 14 C6 20 12 23 18 22" fill="none" stroke="#ff9a2e" stroke-width="3"/><path d="M20 2 C25 5 30 10 30 17" fill="none" stroke="#ffd94a" stroke-width="2.5"/></svg>
<svg class="a" style="left:335.00px;top:8.00px;" width="28" height="28" viewBox="0 0 28 28"><rect x="0" y="0" width="28" height="28" fill="#2e3236"/><path d="M0 0 L28 28 H0 Z" fill="#3a3f44" opacity="0.45"/><path d="M11 7.5 L17.5 14 L11 20.5" fill="none" stroke="#e5e6e8" stroke-width="1.6"/></svg>
<svg class="a" style="left:387.00px;top:7.00px;" width="28" height="28" viewBox="0 0 28 28"><path d="M4 8 L18 3 L20 12 L6 15 Z" fill="#f5b53a"/><rect x="13" y="1" width="14" height="13" fill="#d9a660"/><circle cx="20" cy="7" r="2.5" fill="#f4e6cc"/><rect x="1" y="13" width="26" height="14" fill="#f4f4f4" stroke="#d04040" stroke-width="1" stroke-dasharray="2 2"/><rect x="21" y="15" width="3" height="4" fill="#2a9d8f"/><path d="M5 17 H12 M5 20 H14 M14 23 H20" stroke="#aaa" stroke-width="0.8"/></svg>
<svg class="a" style="left:439.00px;top:8.00px;" width="28" height="28" viewBox="0 0 28 28"><rect x="0" y="0" width="28" height="28" fill="#2d3136"/><path d="M0 14 C3 6 6 7 9 12 C12 18 16 16 19 15 C22 14 25 15 28 17 V28 H0 Z" fill="#4caf7f"/><path d="M0 20 C4 15 10 21 15 20 C20 19 24 21 28 20 V28 H0 Z" fill="#5cbc6a" opacity="0.8"/><circle cx="5" cy="5" r="0.7" fill="#6cd"/><circle cx="7" cy="5" r="0.7" fill="#6cd"/><circle cx="22" cy="12" r="0.7" fill="#6cd"/><circle cx="24" cy="12" r="0.7" fill="#6cd"/></svg>
<div class="a" style="left:1606.00px;top:0.00px;width:186px;height:3px;background:#7d86c6;"></div>
<svg class="a" style="left:1620.00px;top:13.00px;" width="16" height="18" viewBox="0 0 16 18"><rect x="4" y="0.5" width="8" height="3" fill="#232629"/><rect x="1" y="2.5" width="14" height="15" fill="none" stroke="#232629" stroke-width="1.3"/><rect x="1" y="2.5" width="14" height="3" fill="#232629"/><path d="M3.5 8.5 H12.5 M3.5 11 H12.5 M3.5 13.5 H8" stroke="#232629" stroke-width="1.1"/></svg>
<svg class="a" style="left:1649.00px;top:13.00px;" width="18" height="18" viewBox="0 0 18 18"><path d="M1 6 H4 L9 1.5 V16.5 L4 12 H1 Z" fill="#232629"/><path d="M11.5 5 C13 6.5 13 11.5 11.5 13 M13.5 3 C16 5.5 16 12.5 13.5 15" fill="none" stroke="#232629" stroke-width="1.3"/></svg>
<svg class="a" style="left:1679.00px;top:13.00px;" width="18" height="18" viewBox="0 0 18 18"><circle cx="9" cy="9" r="3.8" fill="none" stroke="#232629" stroke-width="1.3"/><path d="M9 5.2 A3.8 3.8 0 0 1 9 12.8 Z" fill="#232629"/><path d="M9 0.5 V3 M9 15 V17.5 M0.5 9 H3 M15 9 H17.5 M3 3 L4.8 4.8 M13.2 13.2 L15 15 M3 15 L4.8 13.2 M13.2 4.8 L15 3" stroke="#232629" stroke-width="1.2"/></svg>
<svg class="a" style="left:1712.00px;top:13.00px;" width="12" height="18" viewBox="0 0 12 18"><rect x="1" y="0.8" width="10" height="16.4" fill="none" stroke="#232629" stroke-width="1.4"/><rect x="1" y="0.8" width="10" height="2.5" fill="#232629"/><rect x="1" y="14.7" width="10" height="2.5" fill="#232629"/><circle cx="6" cy="9" r="2.2" fill="none" stroke="#232629" stroke-width="1"/></svg>
<svg class="a" style="left:1736.00px;top:13.00px;" width="24" height="18" viewBox="0 0 24 18"><path d="M2 6 C8 0 16 0 22 6 M5 9 C9 5 15 5 19 9 M8 12 C10.5 10 13.5 10 16 12" fill="none" stroke="#c0c2c8" stroke-width="1.2"/><circle cx="12" cy="15.5" r="1.6" fill="none" stroke="#232629" stroke-width="1.2"/></svg>
<svg class="a" style="left:1760.00px;top:6.00px;" width="32" height="32" viewBox="0 0 32 32"><path d="M-8.0 -4.0 L0 4.0 L8.0 -4.0" transform="translate(16 16)" fill="none" stroke="#232629" stroke-width="1.2"/></svg>
<div class="t" style="font-size:16px;line-height:18px;height:18px;color:#232629;left:1785.50px;width:80px;text-align:center;top:8.12px;">1:47 PM</div>
<div class="t" style="font-size:13.4px;line-height:14px;height:14px;color:#232629;left:1785.00px;width:80px;text-align:center;top:24.67px;">9/30/24</div>
<svg class="a" style="left:1871.00px;top:13.00px;" width="18" height="19" viewBox="0 0 18 19"><rect x="1" y="1" width="16" height="17" fill="none" stroke="#232629" stroke-width="1.4"/><rect x="1" y="14" width="16" height="4" fill="#7f8187"/></svg>
</div>
<svg class="a" style="left:1009.30px;top:263.00px;" width="18" height="24" viewBox="0 0 18 24"><path d="M3 2.8 L3 18.5 L6.3 17 L10 21 L11.1 19.3 L10.7 15.6 L14.2 13.8 Z" fill="#000" stroke="#fff" stroke-width="1.3" stroke-linejoin="round"/></svg>
</body></html>
